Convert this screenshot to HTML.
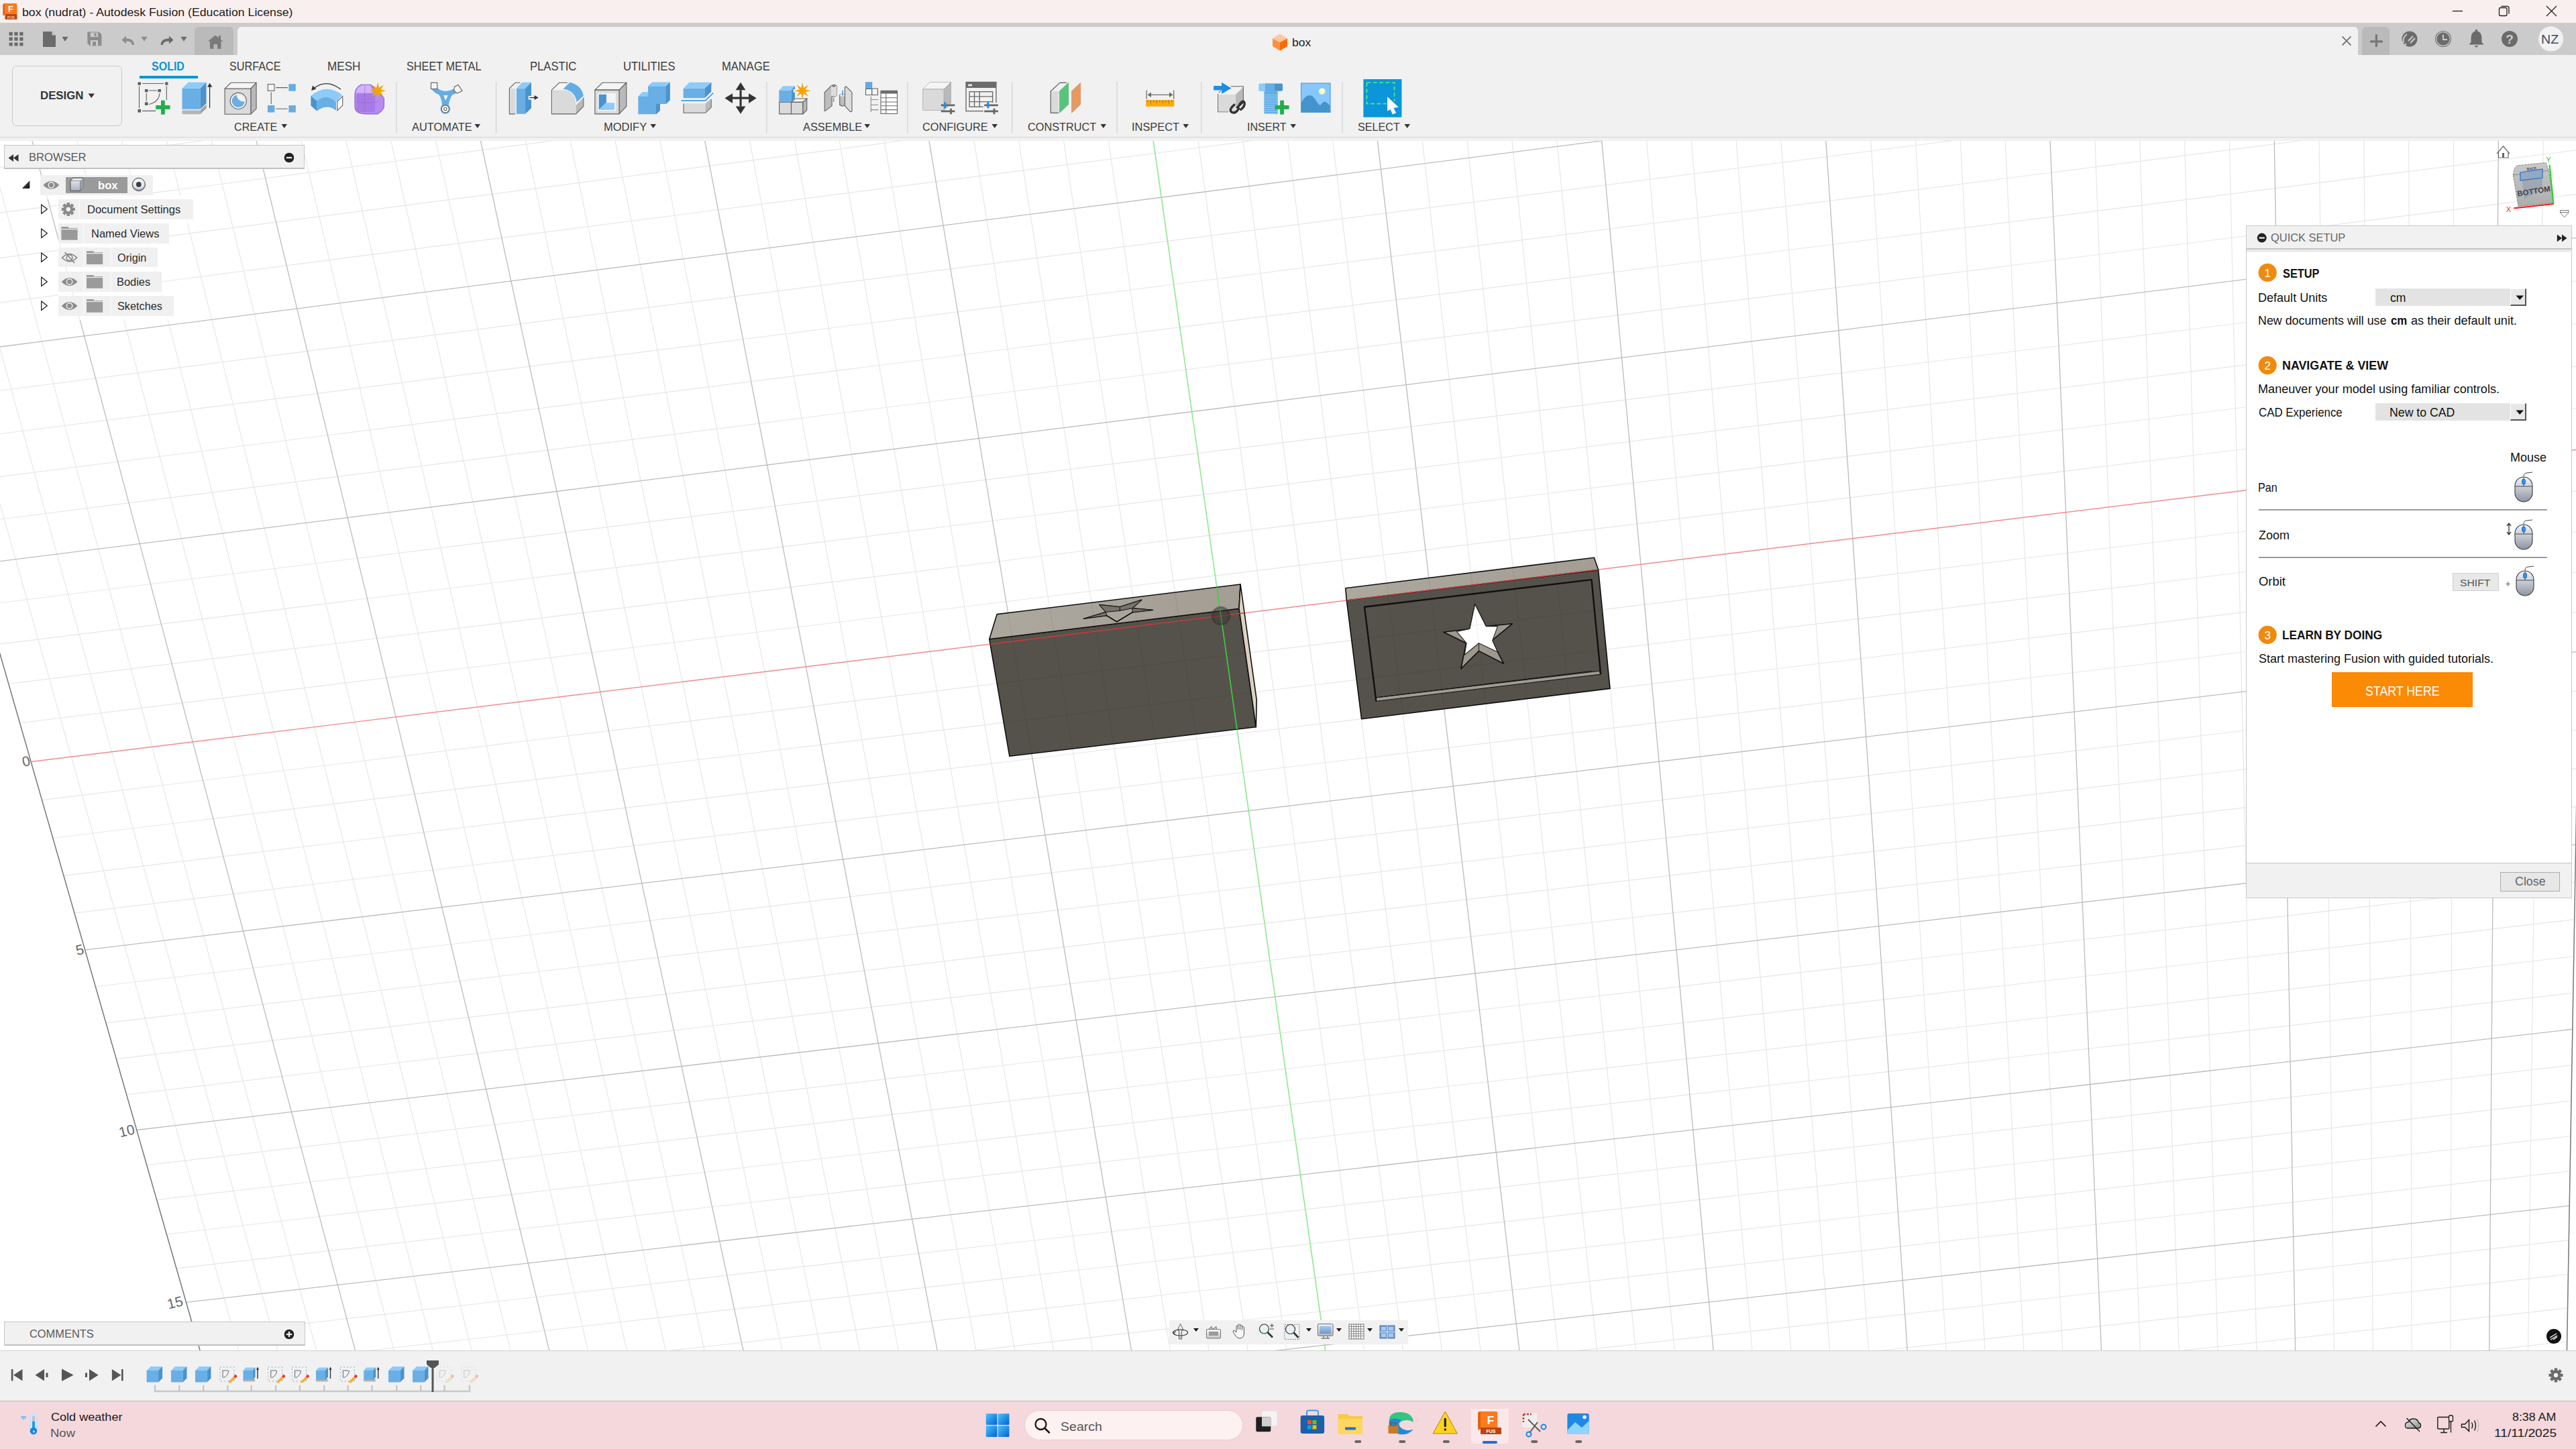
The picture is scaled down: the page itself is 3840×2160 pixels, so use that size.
<!DOCTYPE html>
<html><head><meta charset="utf-8"><style>
html,body{margin:0;padding:0;width:3840px;height:2160px;overflow:hidden;background:#fff;font-family:"Liberation Sans", sans-serif;}
</style></head><body>
<div style="position:absolute;left:0.0px;top:0.0px;width:3840.0px;height:34.0px;background:#f9efee;"></div>
<div style="position:absolute;left:0.0px;top:34.0px;width:3840.0px;height:48.0px;background:#cbcbcb;"></div>
<div style="position:absolute;left:0.0px;top:82.0px;width:3840.0px;height:123.0px;background:#f1f1f1;"></div>
<div style="position:absolute;left:0.0px;top:204.0px;width:3840.0px;height:1.0px;background:#d3d3d3;"></div>
<div style="position:absolute;left:0.0px;top:205.0px;width:3840.0px;height:5.0px;background:#f1f1f1;"></div>
<div style="position:absolute;left:0.0px;top:210.0px;width:3840.0px;height:1803.0px;background:#ffffff;"></div>
<div style="position:absolute;left:0.0px;top:2013.0px;width:3840.0px;height:76.0px;background:#f1f1f1;"></div>
<div style="position:absolute;left:0.0px;top:2013.0px;width:3840.0px;height:1.0px;background:#d0d0d0;"></div>
<div style="position:absolute;left:0.0px;top:2088.0px;width:3840.0px;height:72.0px;background:#f5d8dc;"></div>
<div style="position:absolute;left:0.0px;top:2088.0px;width:3840.0px;height:1.0px;background:#c9b6b8;"></div>
<svg style="position:absolute;left:0px;top:210px;" width="3840" height="1803" viewBox="0 0 3840 1803"><line x1="-317.15" y1="-339.99" x2="512.21" y2="2548.94" stroke="#e6e6e6" stroke-width="1.15"/><line x1="-251.11" y1="-348.94" x2="564.77" y2="2543.36" stroke="#e6e6e6" stroke-width="1.15"/><line x1="-184.98" y1="-357.89" x2="617.37" y2="2537.77" stroke="#e6e6e6" stroke-width="1.15"/><line x1="-118.78" y1="-366.85" x2="670.04" y2="2532.18" stroke="#e6e6e6" stroke-width="1.15"/><line x1="13.90" y1="-384.82" x2="775.52" y2="2520.98" stroke="#e6e6e6" stroke-width="1.15"/><line x1="80.37" y1="-393.82" x2="828.35" y2="2515.37" stroke="#e6e6e6" stroke-width="1.15"/><line x1="146.92" y1="-402.83" x2="881.23" y2="2509.75" stroke="#e6e6e6" stroke-width="1.15"/><line x1="213.56" y1="-411.85" x2="934.16" y2="2504.13" stroke="#e6e6e6" stroke-width="1.15"/><line x1="347.10" y1="-429.93" x2="1040.19" y2="2492.87" stroke="#e6e6e6" stroke-width="1.15"/><line x1="414.00" y1="-438.99" x2="1093.29" y2="2487.23" stroke="#e6e6e6" stroke-width="1.15"/><line x1="480.99" y1="-448.06" x2="1146.44" y2="2481.58" stroke="#e6e6e6" stroke-width="1.15"/><line x1="548.07" y1="-457.14" x2="1199.64" y2="2475.93" stroke="#e6e6e6" stroke-width="1.15"/><line x1="682.48" y1="-475.34" x2="1306.22" y2="2464.61" stroke="#e6e6e6" stroke-width="1.15"/><line x1="749.82" y1="-484.46" x2="1359.59" y2="2458.95" stroke="#e6e6e6" stroke-width="1.15"/><line x1="817.25" y1="-493.59" x2="1413.01" y2="2453.27" stroke="#e6e6e6" stroke-width="1.15"/><line x1="884.77" y1="-502.73" x2="1466.49" y2="2447.59" stroke="#e6e6e6" stroke-width="1.15"/><line x1="1020.06" y1="-521.05" x2="1573.62" y2="2436.21" stroke="#e6e6e6" stroke-width="1.15"/><line x1="1087.84" y1="-530.23" x2="1627.27" y2="2430.52" stroke="#e6e6e6" stroke-width="1.15"/><line x1="1155.71" y1="-539.41" x2="1680.97" y2="2424.81" stroke="#e6e6e6" stroke-width="1.15"/><line x1="1223.67" y1="-548.62" x2="1734.72" y2="2419.10" stroke="#e6e6e6" stroke-width="1.15"/><line x1="1359.86" y1="-567.06" x2="1842.40" y2="2407.67" stroke="#e6e6e6" stroke-width="1.15"/><line x1="1428.09" y1="-576.29" x2="1896.33" y2="2401.94" stroke="#e6e6e6" stroke-width="1.15"/><line x1="1496.41" y1="-585.54" x2="1950.31" y2="2396.21" stroke="#e6e6e6" stroke-width="1.15"/><line x1="1564.82" y1="-594.81" x2="2004.34" y2="2390.47" stroke="#e6e6e6" stroke-width="1.15"/><line x1="1701.90" y1="-613.37" x2="2112.58" y2="2378.97" stroke="#e6e6e6" stroke-width="1.15"/><line x1="1770.58" y1="-622.67" x2="2166.79" y2="2373.22" stroke="#e6e6e6" stroke-width="1.15"/><line x1="1839.35" y1="-631.98" x2="2221.05" y2="2367.45" stroke="#e6e6e6" stroke-width="1.15"/><line x1="1908.21" y1="-641.30" x2="2275.37" y2="2361.68" stroke="#e6e6e6" stroke-width="1.15"/><line x1="2046.21" y1="-659.98" x2="2384.17" y2="2350.13" stroke="#e6e6e6" stroke-width="1.15"/><line x1="2115.35" y1="-669.35" x2="2438.66" y2="2344.34" stroke="#e6e6e6" stroke-width="1.15"/><line x1="2184.57" y1="-678.72" x2="2493.20" y2="2338.55" stroke="#e6e6e6" stroke-width="1.15"/><line x1="2253.89" y1="-688.10" x2="2547.80" y2="2332.75" stroke="#e6e6e6" stroke-width="1.15"/><line x1="2392.80" y1="-706.91" x2="2657.17" y2="2321.13" stroke="#e6e6e6" stroke-width="1.15"/><line x1="2462.40" y1="-716.34" x2="2711.94" y2="2315.32" stroke="#e6e6e6" stroke-width="1.15"/><line x1="2532.09" y1="-725.77" x2="2766.77" y2="2309.49" stroke="#e6e6e6" stroke-width="1.15"/><line x1="2601.87" y1="-735.22" x2="2821.66" y2="2303.67" stroke="#e6e6e6" stroke-width="1.15"/><line x1="2741.71" y1="-754.15" x2="2931.60" y2="2291.99" stroke="#e6e6e6" stroke-width="1.15"/><line x1="2811.77" y1="-763.64" x2="2986.66" y2="2286.14" stroke="#e6e6e6" stroke-width="1.15"/><line x1="2881.92" y1="-773.14" x2="3041.77" y2="2280.29" stroke="#e6e6e6" stroke-width="1.15"/><line x1="2952.17" y1="-782.65" x2="3096.95" y2="2274.43" stroke="#e6e6e6" stroke-width="1.15"/><line x1="3092.95" y1="-801.71" x2="3207.47" y2="2262.69" stroke="#e6e6e6" stroke-width="1.15"/><line x1="3163.47" y1="-811.26" x2="3262.82" y2="2256.81" stroke="#e6e6e6" stroke-width="1.15"/><line x1="3234.10" y1="-820.82" x2="3318.22" y2="2250.93" stroke="#e6e6e6" stroke-width="1.15"/><line x1="3304.82" y1="-830.40" x2="3373.69" y2="2245.04" stroke="#e6e6e6" stroke-width="1.15"/><line x1="3446.54" y1="-849.58" x2="3484.79" y2="2233.24" stroke="#e6e6e6" stroke-width="1.15"/><line x1="3517.54" y1="-859.20" x2="3540.43" y2="2227.33" stroke="#e6e6e6" stroke-width="1.15"/><line x1="3588.64" y1="-868.83" x2="3596.12" y2="2221.41" stroke="#e6e6e6" stroke-width="1.15"/><line x1="3659.84" y1="-878.46" x2="3651.88" y2="2215.49" stroke="#e6e6e6" stroke-width="1.15"/><line x1="3802.51" y1="-897.78" x2="3763.57" y2="2203.63" stroke="#e6e6e6" stroke-width="1.15"/><line x1="3874.00" y1="-907.46" x2="3819.50" y2="2197.69" stroke="#e6e6e6" stroke-width="1.15"/><line x1="518.43" y1="2570.62" x2="3819.09" y2="2220.79" stroke="#e6e6e6" stroke-width="1.15"/><line x1="505.96" y1="2527.18" x2="3819.91" y2="2174.49" stroke="#e6e6e6" stroke-width="1.15"/><line x1="493.39" y1="2483.38" x2="3820.73" y2="2127.81" stroke="#e6e6e6" stroke-width="1.15"/><line x1="467.94" y1="2394.72" x2="3822.39" y2="2033.27" stroke="#e6e6e6" stroke-width="1.15"/><line x1="455.05" y1="2349.85" x2="3823.23" y2="1985.40" stroke="#e6e6e6" stroke-width="1.15"/><line x1="442.07" y1="2304.61" x2="3824.07" y2="1937.13" stroke="#e6e6e6" stroke-width="1.15"/><line x1="428.97" y1="2258.99" x2="3824.93" y2="1888.45" stroke="#e6e6e6" stroke-width="1.15"/><line x1="402.46" y1="2166.63" x2="3826.66" y2="1789.82" stroke="#e6e6e6" stroke-width="1.15"/><line x1="389.03" y1="2119.87" x2="3827.53" y2="1739.88" stroke="#e6e6e6" stroke-width="1.15"/><line x1="375.50" y1="2072.72" x2="3828.42" y2="1689.50" stroke="#e6e6e6" stroke-width="1.15"/><line x1="361.85" y1="2025.17" x2="3829.31" y2="1638.68" stroke="#e6e6e6" stroke-width="1.15"/><line x1="334.20" y1="1928.87" x2="3831.12" y2="1535.71" stroke="#e6e6e6" stroke-width="1.15"/><line x1="320.20" y1="1880.11" x2="3832.03" y2="1483.54" stroke="#e6e6e6" stroke-width="1.15"/><line x1="306.08" y1="1830.92" x2="3832.96" y2="1430.92" stroke="#e6e6e6" stroke-width="1.15"/><line x1="291.84" y1="1781.32" x2="3833.89" y2="1377.82" stroke="#e6e6e6" stroke-width="1.15"/><line x1="262.99" y1="1680.82" x2="3835.78" y2="1270.21" stroke="#e6e6e6" stroke-width="1.15"/><line x1="248.38" y1="1629.91" x2="3836.73" y2="1215.67" stroke="#e6e6e6" stroke-width="1.15"/><line x1="233.63" y1="1578.56" x2="3837.70" y2="1160.64" stroke="#e6e6e6" stroke-width="1.15"/><line x1="218.76" y1="1526.76" x2="3838.68" y2="1105.11" stroke="#e6e6e6" stroke-width="1.15"/><line x1="188.63" y1="1421.79" x2="3840.65" y2="992.53" stroke="#e6e6e6" stroke-width="1.15"/><line x1="173.36" y1="1368.60" x2="3841.65" y2="935.46" stroke="#e6e6e6" stroke-width="1.15"/><line x1="157.95" y1="1314.93" x2="3842.66" y2="877.86" stroke="#e6e6e6" stroke-width="1.15"/><line x1="142.41" y1="1260.79" x2="3843.68" y2="819.73" stroke="#e6e6e6" stroke-width="1.15"/><line x1="110.90" y1="1151.03" x2="3845.75" y2="701.83" stroke="#e6e6e6" stroke-width="1.15"/><line x1="94.93" y1="1095.40" x2="3846.80" y2="642.05" stroke="#e6e6e6" stroke-width="1.15"/><line x1="78.81" y1="1039.26" x2="3847.86" y2="581.70" stroke="#e6e6e6" stroke-width="1.15"/><line x1="62.55" y1="982.61" x2="3848.93" y2="520.77" stroke="#e6e6e6" stroke-width="1.15"/><line x1="29.57" y1="867.73" x2="3851.10" y2="397.16" stroke="#e6e6e6" stroke-width="1.15"/><line x1="12.85" y1="809.49" x2="3852.20" y2="334.47" stroke="#e6e6e6" stroke-width="1.15"/><line x1="-4.03" y1="750.70" x2="3853.31" y2="271.16" stroke="#e6e6e6" stroke-width="1.15"/><line x1="-21.06" y1="691.37" x2="3854.43" y2="207.24" stroke="#e6e6e6" stroke-width="1.15"/><line x1="-55.62" y1="571.00" x2="3856.71" y2="77.50" stroke="#e6e6e6" stroke-width="1.15"/><line x1="-73.14" y1="509.96" x2="3857.87" y2="11.67" stroke="#e6e6e6" stroke-width="1.15"/><line x1="-90.83" y1="448.34" x2="3859.03" y2="-54.81" stroke="#e6e6e6" stroke-width="1.15"/><line x1="-108.69" y1="386.12" x2="3860.21" y2="-121.96" stroke="#e6e6e6" stroke-width="1.15"/><line x1="-144.94" y1="259.87" x2="3862.60" y2="-258.29" stroke="#e6e6e6" stroke-width="1.15"/><line x1="-163.32" y1="195.82" x2="3863.82" y2="-327.50" stroke="#e6e6e6" stroke-width="1.15"/><line x1="-181.89" y1="131.14" x2="3865.04" y2="-397.41" stroke="#e6e6e6" stroke-width="1.15"/><line x1="-200.64" y1="65.83" x2="3866.28" y2="-468.03" stroke="#e6e6e6" stroke-width="1.15"/><line x1="-238.70" y1="-66.75" x2="3868.80" y2="-611.47" stroke="#e6e6e6" stroke-width="1.15"/><line x1="-258.02" y1="-134.04" x2="3870.08" y2="-684.32" stroke="#e6e6e6" stroke-width="1.15"/><line x1="-277.53" y1="-202.00" x2="3871.37" y2="-757.92" stroke="#e6e6e6" stroke-width="1.15"/><line x1="-297.24" y1="-270.65" x2="3872.68" y2="-832.30" stroke="#e6e6e6" stroke-width="1.15"/><line x1="-52.48" y1="-375.83" x2="722.75" y2="2526.58" stroke="#bcbcbc" stroke-width="1.3"/><line x1="280.29" y1="-420.88" x2="987.15" y2="2498.50" stroke="#bcbcbc" stroke-width="1.3"/><line x1="615.23" y1="-466.24" x2="1252.90" y2="2470.28" stroke="#bcbcbc" stroke-width="1.3"/><line x1="952.37" y1="-511.88" x2="1520.03" y2="2441.91" stroke="#bcbcbc" stroke-width="1.3"/><line x1="1291.72" y1="-557.83" x2="1788.54" y2="2413.39" stroke="#bcbcbc" stroke-width="1.3"/><line x1="1977.17" y1="-650.64" x2="2329.74" y2="2355.91" stroke="#bcbcbc" stroke-width="1.3"/><line x1="2323.30" y1="-697.50" x2="2602.46" y2="2326.95" stroke="#bcbcbc" stroke-width="1.3"/><line x1="2671.74" y1="-744.68" x2="2876.60" y2="2297.83" stroke="#bcbcbc" stroke-width="1.3"/><line x1="3022.51" y1="-792.17" x2="3152.18" y2="2268.56" stroke="#bcbcbc" stroke-width="1.3"/><line x1="3375.63" y1="-839.98" x2="3429.21" y2="2239.14" stroke="#bcbcbc" stroke-width="1.3"/><line x1="3731.13" y1="-888.12" x2="3707.69" y2="2209.56" stroke="#bcbcbc" stroke-width="1.3"/><line x1="480.71" y1="2439.23" x2="3821.55" y2="2080.74" stroke="#bcbcbc" stroke-width="1.3"/><line x1="415.77" y1="2213.00" x2="3825.79" y2="1839.35" stroke="#bcbcbc" stroke-width="1.3"/><line x1="348.08" y1="1977.23" x2="3830.21" y2="1587.42" stroke="#bcbcbc" stroke-width="1.3"/><line x1="277.48" y1="1731.28" x2="3834.83" y2="1324.25" stroke="#bcbcbc" stroke-width="1.3"/><line x1="203.76" y1="1474.51" x2="3839.66" y2="1049.08" stroke="#bcbcbc" stroke-width="1.3"/><line x1="126.72" y1="1206.16" x2="3844.71" y2="761.06" stroke="#bcbcbc" stroke-width="1.3"/><line x1="-38.26" y1="631.47" x2="3855.57" y2="142.69" stroke="#bcbcbc" stroke-width="1.3"/><line x1="-126.73" y1="323.30" x2="3861.40" y2="-189.79" stroke="#bcbcbc" stroke-width="1.3"/><line x1="-219.58" y1="-0.14" x2="3867.54" y2="-539.38" stroke="#bcbcbc" stroke-width="1.3"/><line x1="-317.15" y1="-339.99" x2="3874.00" y2="-907.46" stroke="#bcbcbc" stroke-width="1.3"/><line x1="-317.15" y1="-339.99" x2="512.21" y2="2548.94" stroke="#7a7a7a" stroke-width="1.5"/><line x1="3874.00" y1="-907.46" x2="3819.50" y2="2197.69" stroke="#7a7a7a" stroke-width="1.5"/><line x1="46.13" y1="925.44" x2="3850.01" y2="459.26" stroke="#f08a8a" stroke-width="1.4"/><line x1="1633.32" y1="-604.08" x2="2058.44" y2="2384.72" stroke="#8fe88f" stroke-width="1.6"/></svg>
<div style="position:absolute;left:9px;top:1123px;width:60px;height:24px;line-height:24px;text-align:center;font-size:21px;color:#666;transform:rotate(-14deg)">0</div>
<div style="position:absolute;left:89px;top:1404px;width:60px;height:24px;line-height:24px;text-align:center;font-size:21px;color:#666;transform:rotate(-14deg)">5</div>
<div style="position:absolute;left:158.6px;top:1674px;width:60px;height:24px;line-height:24px;text-align:center;font-size:21px;color:#666;transform:rotate(-14deg)">10</div>
<div style="position:absolute;left:231px;top:1930px;width:60px;height:24px;line-height:24px;text-align:center;font-size:21px;color:#666;transform:rotate(-14deg)">15</div>
<svg style="position:absolute;left:0px;top:210px;" width="3840" height="1803" viewBox="0 0 3840 1803"><defs><linearGradient id="tf" x1="0" y1="0" x2="1" y2="0"><stop offset="0" stop-color="#ada89f"/><stop offset="1" stop-color="#a39e94"/></linearGradient><clipPath id="bx"><polygon points="1486.2,705.6 1849.1,661.0 1847.0,697.3 1474.8,742.8"/><polygon points="1474.8,742.8 1847.0,697.3 1872.3,873.8 1504.9,917.3"/><polygon points="1849.1,661.0 1873.3,833.9 1872.3,873.8 1847.0,697.3"/><polygon points="2005.8,666.7 2376.4,621.3 2382.6,639.6 2007.4,685.0"/><polygon points="2007.4,685.0 2382.6,639.6 2400.0,816.4 2029.6,861.8"/></clipPath></defs><polygon points="1474.8,742.8 1847.0,697.3 1872.3,873.8 1504.9,917.3" fill="#55524c" stroke="#111" stroke-width="1.6" stroke-linejoin="round"/><polygon points="1486.2,705.6 1849.1,661.0 1847.0,697.3 1474.8,742.8" fill="url(#tf)" stroke="#111" stroke-width="1.6" stroke-linejoin="round"/><polygon points="1849.1,661.0 1873.3,833.9 1872.3,873.8 1847.0,697.3" fill="#dcd2c2" stroke="#111" stroke-width="1.6" stroke-linejoin="round"/><polygon points="1615.2,712.4 1648.3,702.4 1638.8,691.5 1669.4,694.6 1701.9,684.2 1688.0,696.7 1718.7,699.3 1688.0,702.9 1664.7,716.9 1649.8,707.6" fill="#aaa59c" stroke="#111" stroke-width="1.3" stroke-linejoin="round"/><polygon points="1638.8,691.5 1669.4,694.6 1669.4,700.4 1648.3,702.4" fill="#77746e" stroke="#111" stroke-width="1" stroke-linejoin="round"/><polygon points="1669.4,694.6 1701.9,684.2 1688.0,696.7 1669.4,700.4" fill="#77746e" stroke="#111" stroke-width="1" stroke-linejoin="round"/><polygon points="1615.2,712.4 1648.3,702.4 1649.8,707.6" fill="#77746e" stroke="#111" stroke-width="1" stroke-linejoin="round"/><polygon points="1688.0,696.7 1718.7,699.3 1688.0,702.9" fill="#77746e" stroke="#111" stroke-width="1" stroke-linejoin="round"/><polyline points="1649.8,707.6 1664.7,716.9 1688.0,702.9" fill="none" stroke="#111" stroke-width="1.3"/><polygon points="2007.4,685.0 2382.6,639.6 2400.0,816.4 2029.6,861.8" fill="#55524c" stroke="#111" stroke-width="1.6" stroke-linejoin="round"/><polygon points="2005.8,666.7 2376.4,621.3 2382.6,639.6 2007.4,685.0" fill="url(#tf)" stroke="#111" stroke-width="1.6" stroke-linejoin="round"/><polygon points="2051.4,829.9 2384.1,790.3 2386.1,795.1 2051.4,835.3" fill="#a19c92" stroke="#111" stroke-width="1"/><polyline points="2051.4,835.3 2034.0,694.7 2372.5,654.1 2386.1,795.1" fill="none" stroke="#111" stroke-width="2.4" stroke-linejoin="round"/><polyline points="2051.4,829.9 2372.5,790.3" fill="none" stroke="#111" stroke-width="1"/><polygon points="2198.7,690.8 2215.1,723.6 2254.3,719.8 2223.8,744.9 2241.5,779.3 2204.5,760.4 2177.8,787.0 2185.5,748.8 2151.9,732.3 2190.9,727.5" fill="#9e998d" stroke="#111" stroke-width="1.6" stroke-linejoin="round"/><polygon points="2198.7,690.8 2215.1,723.6 2232.5,723.6 2224.7,744.9 2232.5,761.9 2204.5,748.8 2183.2,766.2 2186.1,748.8 2171.6,731.4 2190.9,727.5" fill="#ffffff" stroke="#222" stroke-width="1.1" stroke-linejoin="round"/><polyline points="2204.5,748.8 2204.5,760.4" fill="none" stroke="#222" stroke-width="1"/><g clip-path="url(#bx)" opacity="0.07"><line x1="-317.15" y1="-339.99" x2="512.21" y2="2548.94" stroke="#000" stroke-width="1"/><line x1="-251.11" y1="-348.94" x2="564.77" y2="2543.36" stroke="#000" stroke-width="1"/><line x1="-184.98" y1="-357.89" x2="617.37" y2="2537.77" stroke="#000" stroke-width="1"/><line x1="-118.78" y1="-366.85" x2="670.04" y2="2532.18" stroke="#000" stroke-width="1"/><line x1="-52.48" y1="-375.83" x2="722.75" y2="2526.58" stroke="#000" stroke-width="1"/><line x1="13.90" y1="-384.82" x2="775.52" y2="2520.98" stroke="#000" stroke-width="1"/><line x1="80.37" y1="-393.82" x2="828.35" y2="2515.37" stroke="#000" stroke-width="1"/><line x1="146.92" y1="-402.83" x2="881.23" y2="2509.75" stroke="#000" stroke-width="1"/><line x1="213.56" y1="-411.85" x2="934.16" y2="2504.13" stroke="#000" stroke-width="1"/><line x1="280.29" y1="-420.88" x2="987.15" y2="2498.50" stroke="#000" stroke-width="1"/><line x1="347.10" y1="-429.93" x2="1040.19" y2="2492.87" stroke="#000" stroke-width="1"/><line x1="414.00" y1="-438.99" x2="1093.29" y2="2487.23" stroke="#000" stroke-width="1"/><line x1="480.99" y1="-448.06" x2="1146.44" y2="2481.58" stroke="#000" stroke-width="1"/><line x1="548.07" y1="-457.14" x2="1199.64" y2="2475.93" stroke="#000" stroke-width="1"/><line x1="615.23" y1="-466.24" x2="1252.90" y2="2470.28" stroke="#000" stroke-width="1"/><line x1="682.48" y1="-475.34" x2="1306.22" y2="2464.61" stroke="#000" stroke-width="1"/><line x1="749.82" y1="-484.46" x2="1359.59" y2="2458.95" stroke="#000" stroke-width="1"/><line x1="817.25" y1="-493.59" x2="1413.01" y2="2453.27" stroke="#000" stroke-width="1"/><line x1="884.77" y1="-502.73" x2="1466.49" y2="2447.59" stroke="#000" stroke-width="1"/><line x1="952.37" y1="-511.88" x2="1520.03" y2="2441.91" stroke="#000" stroke-width="1"/><line x1="1020.06" y1="-521.05" x2="1573.62" y2="2436.21" stroke="#000" stroke-width="1"/><line x1="1087.84" y1="-530.23" x2="1627.27" y2="2430.52" stroke="#000" stroke-width="1"/><line x1="1155.71" y1="-539.41" x2="1680.97" y2="2424.81" stroke="#000" stroke-width="1"/><line x1="1223.67" y1="-548.62" x2="1734.72" y2="2419.10" stroke="#000" stroke-width="1"/><line x1="1291.72" y1="-557.83" x2="1788.54" y2="2413.39" stroke="#000" stroke-width="1"/><line x1="1359.86" y1="-567.06" x2="1842.40" y2="2407.67" stroke="#000" stroke-width="1"/><line x1="1428.09" y1="-576.29" x2="1896.33" y2="2401.94" stroke="#000" stroke-width="1"/><line x1="1496.41" y1="-585.54" x2="1950.31" y2="2396.21" stroke="#000" stroke-width="1"/><line x1="1564.82" y1="-594.81" x2="2004.34" y2="2390.47" stroke="#000" stroke-width="1"/><line x1="1633.32" y1="-604.08" x2="2058.44" y2="2384.72" stroke="#000" stroke-width="1"/><line x1="1701.90" y1="-613.37" x2="2112.58" y2="2378.97" stroke="#000" stroke-width="1"/><line x1="1770.58" y1="-622.67" x2="2166.79" y2="2373.22" stroke="#000" stroke-width="1"/><line x1="1839.35" y1="-631.98" x2="2221.05" y2="2367.45" stroke="#000" stroke-width="1"/><line x1="1908.21" y1="-641.30" x2="2275.37" y2="2361.68" stroke="#000" stroke-width="1"/><line x1="1977.17" y1="-650.64" x2="2329.74" y2="2355.91" stroke="#000" stroke-width="1"/><line x1="2046.21" y1="-659.98" x2="2384.17" y2="2350.13" stroke="#000" stroke-width="1"/><line x1="2115.35" y1="-669.35" x2="2438.66" y2="2344.34" stroke="#000" stroke-width="1"/><line x1="2184.57" y1="-678.72" x2="2493.20" y2="2338.55" stroke="#000" stroke-width="1"/><line x1="2253.89" y1="-688.10" x2="2547.80" y2="2332.75" stroke="#000" stroke-width="1"/><line x1="2323.30" y1="-697.50" x2="2602.46" y2="2326.95" stroke="#000" stroke-width="1"/><line x1="2392.80" y1="-706.91" x2="2657.17" y2="2321.13" stroke="#000" stroke-width="1"/><line x1="2462.40" y1="-716.34" x2="2711.94" y2="2315.32" stroke="#000" stroke-width="1"/><line x1="2532.09" y1="-725.77" x2="2766.77" y2="2309.49" stroke="#000" stroke-width="1"/><line x1="2601.87" y1="-735.22" x2="2821.66" y2="2303.67" stroke="#000" stroke-width="1"/><line x1="2671.74" y1="-744.68" x2="2876.60" y2="2297.83" stroke="#000" stroke-width="1"/><line x1="2741.71" y1="-754.15" x2="2931.60" y2="2291.99" stroke="#000" stroke-width="1"/><line x1="2811.77" y1="-763.64" x2="2986.66" y2="2286.14" stroke="#000" stroke-width="1"/><line x1="2881.92" y1="-773.14" x2="3041.77" y2="2280.29" stroke="#000" stroke-width="1"/><line x1="2952.17" y1="-782.65" x2="3096.95" y2="2274.43" stroke="#000" stroke-width="1"/><line x1="3022.51" y1="-792.17" x2="3152.18" y2="2268.56" stroke="#000" stroke-width="1"/><line x1="3092.95" y1="-801.71" x2="3207.47" y2="2262.69" stroke="#000" stroke-width="1"/><line x1="3163.47" y1="-811.26" x2="3262.82" y2="2256.81" stroke="#000" stroke-width="1"/><line x1="3234.10" y1="-820.82" x2="3318.22" y2="2250.93" stroke="#000" stroke-width="1"/><line x1="3304.82" y1="-830.40" x2="3373.69" y2="2245.04" stroke="#000" stroke-width="1"/><line x1="3375.63" y1="-839.98" x2="3429.21" y2="2239.14" stroke="#000" stroke-width="1"/><line x1="3446.54" y1="-849.58" x2="3484.79" y2="2233.24" stroke="#000" stroke-width="1"/><line x1="3517.54" y1="-859.20" x2="3540.43" y2="2227.33" stroke="#000" stroke-width="1"/><line x1="3588.64" y1="-868.83" x2="3596.12" y2="2221.41" stroke="#000" stroke-width="1"/><line x1="3659.84" y1="-878.46" x2="3651.88" y2="2215.49" stroke="#000" stroke-width="1"/><line x1="3731.13" y1="-888.12" x2="3707.69" y2="2209.56" stroke="#000" stroke-width="1"/><line x1="3802.51" y1="-897.78" x2="3763.57" y2="2203.63" stroke="#000" stroke-width="1"/><line x1="3874.00" y1="-907.46" x2="3819.50" y2="2197.69" stroke="#000" stroke-width="1"/><line x1="518.43" y1="2570.62" x2="3819.09" y2="2220.79" stroke="#000" stroke-width="1"/><line x1="505.96" y1="2527.18" x2="3819.91" y2="2174.49" stroke="#000" stroke-width="1"/><line x1="493.39" y1="2483.38" x2="3820.73" y2="2127.81" stroke="#000" stroke-width="1"/><line x1="480.71" y1="2439.23" x2="3821.55" y2="2080.74" stroke="#000" stroke-width="1"/><line x1="467.94" y1="2394.72" x2="3822.39" y2="2033.27" stroke="#000" stroke-width="1"/><line x1="455.05" y1="2349.85" x2="3823.23" y2="1985.40" stroke="#000" stroke-width="1"/><line x1="442.07" y1="2304.61" x2="3824.07" y2="1937.13" stroke="#000" stroke-width="1"/><line x1="428.97" y1="2258.99" x2="3824.93" y2="1888.45" stroke="#000" stroke-width="1"/><line x1="415.77" y1="2213.00" x2="3825.79" y2="1839.35" stroke="#000" stroke-width="1"/><line x1="402.46" y1="2166.63" x2="3826.66" y2="1789.82" stroke="#000" stroke-width="1"/><line x1="389.03" y1="2119.87" x2="3827.53" y2="1739.88" stroke="#000" stroke-width="1"/><line x1="375.50" y1="2072.72" x2="3828.42" y2="1689.50" stroke="#000" stroke-width="1"/><line x1="361.85" y1="2025.17" x2="3829.31" y2="1638.68" stroke="#000" stroke-width="1"/><line x1="348.08" y1="1977.23" x2="3830.21" y2="1587.42" stroke="#000" stroke-width="1"/><line x1="334.20" y1="1928.87" x2="3831.12" y2="1535.71" stroke="#000" stroke-width="1"/><line x1="320.20" y1="1880.11" x2="3832.03" y2="1483.54" stroke="#000" stroke-width="1"/><line x1="306.08" y1="1830.92" x2="3832.96" y2="1430.92" stroke="#000" stroke-width="1"/><line x1="291.84" y1="1781.32" x2="3833.89" y2="1377.82" stroke="#000" stroke-width="1"/><line x1="277.48" y1="1731.28" x2="3834.83" y2="1324.25" stroke="#000" stroke-width="1"/><line x1="262.99" y1="1680.82" x2="3835.78" y2="1270.21" stroke="#000" stroke-width="1"/><line x1="248.38" y1="1629.91" x2="3836.73" y2="1215.67" stroke="#000" stroke-width="1"/><line x1="233.63" y1="1578.56" x2="3837.70" y2="1160.64" stroke="#000" stroke-width="1"/><line x1="218.76" y1="1526.76" x2="3838.68" y2="1105.11" stroke="#000" stroke-width="1"/><line x1="203.76" y1="1474.51" x2="3839.66" y2="1049.08" stroke="#000" stroke-width="1"/><line x1="188.63" y1="1421.79" x2="3840.65" y2="992.53" stroke="#000" stroke-width="1"/><line x1="173.36" y1="1368.60" x2="3841.65" y2="935.46" stroke="#000" stroke-width="1"/><line x1="157.95" y1="1314.93" x2="3842.66" y2="877.86" stroke="#000" stroke-width="1"/><line x1="142.41" y1="1260.79" x2="3843.68" y2="819.73" stroke="#000" stroke-width="1"/><line x1="126.72" y1="1206.16" x2="3844.71" y2="761.06" stroke="#000" stroke-width="1"/><line x1="110.90" y1="1151.03" x2="3845.75" y2="701.83" stroke="#000" stroke-width="1"/><line x1="94.93" y1="1095.40" x2="3846.80" y2="642.05" stroke="#000" stroke-width="1"/><line x1="78.81" y1="1039.26" x2="3847.86" y2="581.70" stroke="#000" stroke-width="1"/><line x1="62.55" y1="982.61" x2="3848.93" y2="520.77" stroke="#000" stroke-width="1"/><line x1="46.13" y1="925.44" x2="3850.01" y2="459.26" stroke="#000" stroke-width="1"/><line x1="29.57" y1="867.73" x2="3851.10" y2="397.16" stroke="#000" stroke-width="1"/><line x1="12.85" y1="809.49" x2="3852.20" y2="334.47" stroke="#000" stroke-width="1"/><line x1="-4.03" y1="750.70" x2="3853.31" y2="271.16" stroke="#000" stroke-width="1"/><line x1="-21.06" y1="691.37" x2="3854.43" y2="207.24" stroke="#000" stroke-width="1"/><line x1="-38.26" y1="631.47" x2="3855.57" y2="142.69" stroke="#000" stroke-width="1"/><line x1="-55.62" y1="571.00" x2="3856.71" y2="77.50" stroke="#000" stroke-width="1"/><line x1="-73.14" y1="509.96" x2="3857.87" y2="11.67" stroke="#000" stroke-width="1"/><line x1="-90.83" y1="448.34" x2="3859.03" y2="-54.81" stroke="#000" stroke-width="1"/><line x1="-108.69" y1="386.12" x2="3860.21" y2="-121.96" stroke="#000" stroke-width="1"/><line x1="-126.73" y1="323.30" x2="3861.40" y2="-189.79" stroke="#000" stroke-width="1"/><line x1="-144.94" y1="259.87" x2="3862.60" y2="-258.29" stroke="#000" stroke-width="1"/><line x1="-163.32" y1="195.82" x2="3863.82" y2="-327.50" stroke="#000" stroke-width="1"/><line x1="-181.89" y1="131.14" x2="3865.04" y2="-397.41" stroke="#000" stroke-width="1"/><line x1="-200.64" y1="65.83" x2="3866.28" y2="-468.03" stroke="#000" stroke-width="1"/><line x1="-219.58" y1="-0.14" x2="3867.54" y2="-539.38" stroke="#000" stroke-width="1"/><line x1="-238.70" y1="-66.75" x2="3868.80" y2="-611.47" stroke="#000" stroke-width="1"/><line x1="-258.02" y1="-134.04" x2="3870.08" y2="-684.32" stroke="#000" stroke-width="1"/><line x1="-277.53" y1="-202.00" x2="3871.37" y2="-757.92" stroke="#000" stroke-width="1"/><line x1="-297.24" y1="-270.65" x2="3872.68" y2="-832.30" stroke="#000" stroke-width="1"/><line x1="-317.15" y1="-339.99" x2="3874.00" y2="-907.46" stroke="#000" stroke-width="1"/></g><g clip-path="url(#bx)"><line x1="46.13" y1="925.44" x2="3850.01" y2="459.26" stroke="#c43c3c" stroke-width="1.6"/><line x1="1633.32" y1="-604.08" x2="2058.44" y2="2384.72" stroke="#3fd03f" stroke-width="1.6"/></g><circle cx="1819.9" cy="708.1" r="13" fill="rgba(50,50,50,0.42)" stroke="rgba(40,40,40,0.35)" stroke-width="3"/></svg>
<div style="position:absolute;left:32.98px;top:10.00px;font-size:17.32px;line-height:1;white-space:nowrap;transform-origin:0 0;transform:scaleX(1.0227);color:#1b1b1b;font-weight:normal;">box (nudrat) - Autodesk Fusion (Education License)</div>
<svg style="position:absolute;left:3px;top:4px;" width="24" height="26" viewBox="0 0 24 26"><rect x="1.5" y="1" width="21" height="17" rx="2" fill="#ff7a1a"/>
<path d="M1.5 3 L4 1 L4 18 L1.5 20Z" fill="#e0600a"/>
<rect x="4.5" y="17" width="18" height="8" rx="1" fill="#b8460f"/>
<text x="13" y="14" font-size="13" font-weight="bold" fill="#fff" text-anchor="middle" font-family="Liberation Sans">F</text>
<text x="13.5" y="23.6" font-size="5.5" font-weight="bold" fill="#fbd2b8" text-anchor="middle" font-family="Liberation Sans">FUS</text></svg>
<svg style="position:absolute;left:3650px;top:0px;" width="190" height="34" viewBox="0 0 190 34"><line x1="5.8" y1="16.5" x2="21" y2="16.5" stroke="#1f1f1f" stroke-width="1.3"/>
<rect x="75.5" y="11.5" width="11.5" height="12" rx="2" fill="none" stroke="#1f1f1f" stroke-width="1.3"/>
<path d="M78.5 9.3 H87.5 Q90 9.3 90 11.8 V20.5" fill="none" stroke="#1f1f1f" stroke-width="1.3"/>
<path d="M146 9 L161 24 M161 9 L146 24" stroke="#1f1f1f" stroke-width="1.3"/></svg>
<div style="position:absolute;left:289.6px;top:40.0px;width:58.2px;height:42.0px;background:#bababa;border-radius:6px 6px 0 0;"></div>
<div style="position:absolute;left:354.0px;top:40.0px;width:3160.5px;height:42.0px;background:#f1f1f1;border-radius:6px 6px 0 0;"></div>
<div style="position:absolute;left:3521.0px;top:40.0px;width:41.0px;height:42.0px;background:#bababa;border-radius:6px 6px 0 0;"></div>
<svg style="position:absolute;left:0px;top:34px;" width="400" height="48" viewBox="0 0 400 48">
<g fill="#6b6b6b">
<rect x="13.6" y="13.8" width="5.2" height="5.2" rx="0.8"/><rect x="21.4" y="13.8" width="5.2" height="5.2" rx="0.8"/><rect x="29.3" y="13.8" width="5.2" height="5.2" rx="0.8"/>
<rect x="13.6" y="21.6" width="5.2" height="5.2" rx="0.8"/><rect x="21.4" y="21.6" width="5.2" height="5.2" rx="0.8"/><rect x="29.3" y="21.6" width="5.2" height="5.2" rx="0.8"/>
<rect x="13.6" y="29.4" width="5.2" height="5.2" rx="0.8"/><rect x="21.4" y="29.4" width="5.2" height="5.2" rx="0.8"/><rect x="29.3" y="29.4" width="5.2" height="5.2" rx="0.8"/>
<path d="M64 13 H77 L83 19 V36 H64Z"/><path d="M77.5 13.5 L82.5 18.5 H77.5Z" fill="#cbcbcb"/>
<path d="M92.4 20.7 H101.7 L97 27.8Z"/>
<path d="M269.4 20.7 H278.7 L274 27.8Z"/>
<path d="M239.5 33 Q240 24 250 23.5 L252 23.5 L252 19.5 L258.5 25.5 L252 31.5 L252 27.5 L250 27.5 Q243 28 243 33Z"/>
</g>
<g fill="#8d8d8d">
<path d="M130.4 13.4 H147.5 L151.4 17.3 V34.3 H134 L130.4 30.7Z"/>
<rect x="135" y="14.5" width="11" height="6.5" fill="#cbcbcb"/><rect x="140.5" y="15.5" width="3" height="4.5" fill="#8d8d8d"/>
<rect x="135" y="26" width="11" height="8.3" fill="#cbcbcb"/><rect x="138" y="28" width="5" height="6.3" fill="#8d8d8d"/>
<path d="M200 33 Q200 24 190 23.5 L188 23.5 L188 19.5 L181.5 25.5 L188 31.5 L188 27.5 L190 27.5 Q197 28 196.5 33Z"/>
<path d="M210.4 20.7 H219.7 L215 27.8Z"/>
</g>
<path d="M310 27.5 L321 18.5 L332.3 27.5 L329.5 27.5 L329.5 38.7 L324 38.7 L324 32 L318.5 32 L318.5 38.7 L313 38.7 L313 27.5Z" fill="#7a7a7a"/>
<rect x="326" y="19" width="3" height="6" fill="#7a7a7a"/>
</svg>
<svg style="position:absolute;left:1896px;top:50px;" width="24" height="26" viewBox="0 0 24 26"><path d="M12 1 L23 7.5 L23 19 L12 25.5 L1 19 L1 7.5Z" fill="#ff8f40"/>
<path d="M12 1 L23 7.5 L12 13.5 L1 7.5Z" fill="#ffc8a0"/><path d="M12 13.5 L23 7.5 L23 19 L12 25.5Z" fill="#ff6a00"/></svg>
<div style="position:absolute;left:1926.29px;top:54.80px;font-size:17.32px;line-height:1;white-space:nowrap;transform-origin:0 0;transform:scaleX(1.0126);color:#222;font-weight:normal;">box</div>
<svg style="position:absolute;left:3480px;top:34px;" width="360" height="48" viewBox="0 0 360 48">
<path d="M11.5 20.3 L24.4 33.5 M24.4 20.3 L11.5 33.5" stroke="#777" stroke-width="1.8"/>
<path d="M53 27.8 H71.8 M62.4 17.2 V36" stroke="#777" stroke-width="3.2"/>
<circle cx="112" cy="24" r="11.5" fill="#6b6b6b"/>
<path d="M103 30 Q101 22 108 17" stroke="#cbcbcb" stroke-width="2" fill="none"/>
<path d="M110 27 L117 20 M113 30 L120 23 M107 31 L103 35" stroke="#cbcbcb" stroke-width="2.2"/>
<circle cx="162" cy="24" r="12" fill="#6b6b6b"/><circle cx="162" cy="24" r="10.3" fill="none" stroke="#cbcbcb" stroke-width="1.2"/>
<path d="M162 17.5 V25 H168" stroke="#cbcbcb" stroke-width="2" fill="none"/>
<path d="M211.5 12 Q219 13 219.5 22 V29 L222.5 32.5 H200.5 L203.5 29 V22 Q204 13 211.5 12Z" fill="#6b6b6b"/><rect x="210" y="10" width="3" height="3" fill="#6b6b6b"/>
<path d="M208.5 34 H214.5 L211.5 37Z" fill="#6b6b6b"/>
<circle cx="261" cy="24" r="12" fill="#6b6b6b"/>
<text x="261" y="31" font-size="19" font-weight="bold" fill="#cbcbcb" text-anchor="middle" font-family="Liberation Sans">?</text>
<circle cx="322.6" cy="24" r="18.6" fill="#f1f1f1"/>
</svg>
<div style="position:absolute;left:3788.39px;top:50.50px;font-size:17.6px;line-height:1;white-space:nowrap;transform-origin:0 0;transform:scaleX(1.1143);color:#3b4a6b;font-weight:normal;">NZ</div>
<div style="position:absolute;left:17.6px;top:98.0px;width:164.1px;height:90.4px;background:#f1f1f1;box-sizing:border-box;border:1.4px solid #c9c9c9;border-radius:7px;"></div>
<div style="position:absolute;left:59.60px;top:134.90px;font-size:16.76px;line-height:1;white-space:nowrap;transform-origin:0 0;transform:scaleX(1.0045);color:#333;font-weight:bold;">DESIGN</div>
<svg style="position:absolute;left:131px;top:139px;" width="11" height="8" viewBox="0 0 11 8"><path d="M0.5 0.5 H10 L5.25 7Z" fill="#333"/></svg>
<div style="position:absolute;left:226.00px;top:90.60px;font-size:17.88px;line-height:1;white-space:nowrap;transform-origin:0 0;transform:scaleX(0.8962);color:#0696d7;font-weight:bold;">SOLID</div>
<div style="position:absolute;left:342.40px;top:90.60px;font-size:17.88px;line-height:1;white-space:nowrap;transform-origin:0 0;transform:scaleX(0.9072);color:#3c3c3c;font-weight:normal;">SURFACE</div>
<div style="position:absolute;left:488.04px;top:90.60px;font-size:17.88px;line-height:1;white-space:nowrap;transform-origin:0 0;transform:scaleX(0.9577);color:#3c3c3c;font-weight:normal;">MESH</div>
<div style="position:absolute;left:606.40px;top:90.60px;font-size:17.88px;line-height:1;white-space:nowrap;transform-origin:0 0;transform:scaleX(0.9105);color:#3c3c3c;font-weight:normal;">SHEET METAL</div>
<div style="position:absolute;left:789.87px;top:90.60px;font-size:17.88px;line-height:1;white-space:nowrap;transform-origin:0 0;transform:scaleX(0.9315);color:#3c3c3c;font-weight:normal;">PLASTIC</div>
<div style="position:absolute;left:929.07px;top:90.60px;font-size:17.88px;line-height:1;white-space:nowrap;transform-origin:0 0;transform:scaleX(0.9291);color:#3c3c3c;font-weight:normal;">UTILITIES</div>
<div style="position:absolute;left:1076.07px;top:90.60px;font-size:17.88px;line-height:1;white-space:nowrap;transform-origin:0 0;transform:scaleX(0.9282);color:#3c3c3c;font-weight:normal;">MANAGE</div>
<div style="position:absolute;left:207.6px;top:113.0px;width:87.2px;height:4.0px;background:#0696d7;"></div>
<div style="position:absolute;left:349.40px;top:181.80px;font-size:16.76px;line-height:1;white-space:nowrap;transform-origin:0 0;transform:scaleX(0.9651);color:#3c3c3c;font-weight:normal;">CREATE</div>
<svg style="position:absolute;left:419px;top:184px;" width="10" height="8" viewBox="0 0 10 8"><path d="M0.5 1 H9 L4.75 7Z" fill="#333"/></svg>
<div style="position:absolute;left:613.50px;top:181.80px;font-size:16.76px;line-height:1;white-space:nowrap;transform-origin:0 0;transform:scaleX(0.9799);color:#3c3c3c;font-weight:normal;">AUTOMATE</div>
<svg style="position:absolute;left:707px;top:184px;" width="10" height="8" viewBox="0 0 10 8"><path d="M0.5 1 H9 L4.75 7Z" fill="#333"/></svg>
<div style="position:absolute;left:900.02px;top:181.80px;font-size:16.76px;line-height:1;white-space:nowrap;transform-origin:0 0;transform:scaleX(0.9849);color:#3c3c3c;font-weight:normal;">MODIFY</div>
<svg style="position:absolute;left:968.9px;top:184px;" width="10" height="8" viewBox="0 0 10 8"><path d="M0.5 1 H9 L4.75 7Z" fill="#333"/></svg>
<div style="position:absolute;left:1197.00px;top:181.80px;font-size:16.76px;line-height:1;white-space:nowrap;transform-origin:0 0;transform:scaleX(0.9764);color:#3c3c3c;font-weight:normal;">ASSEMBLE</div>
<svg style="position:absolute;left:1288px;top:184px;" width="10" height="8" viewBox="0 0 10 8"><path d="M0.5 1 H9 L4.75 7Z" fill="#333"/></svg>
<div style="position:absolute;left:1375.00px;top:181.80px;font-size:16.76px;line-height:1;white-space:nowrap;transform-origin:0 0;transform:scaleX(0.9708);color:#3c3c3c;font-weight:normal;">CONFIGURE</div>
<svg style="position:absolute;left:1478px;top:184px;" width="10" height="8" viewBox="0 0 10 8"><path d="M0.5 1 H9 L4.75 7Z" fill="#333"/></svg>
<div style="position:absolute;left:1532.00px;top:181.80px;font-size:16.76px;line-height:1;white-space:nowrap;transform-origin:0 0;transform:scaleX(0.9722);color:#3c3c3c;font-weight:normal;">CONSTRUCT</div>
<svg style="position:absolute;left:1639.5px;top:184px;" width="10" height="8" viewBox="0 0 10 8"><path d="M0.5 1 H9 L4.75 7Z" fill="#333"/></svg>
<div style="position:absolute;left:1686.62px;top:181.80px;font-size:16.76px;line-height:1;white-space:nowrap;transform-origin:0 0;transform:scaleX(0.9795);color:#3c3c3c;font-weight:normal;">INSPECT</div>
<svg style="position:absolute;left:1763px;top:184px;" width="10" height="8" viewBox="0 0 10 8"><path d="M0.5 1 H9 L4.75 7Z" fill="#333"/></svg>
<div style="position:absolute;left:1859.04px;top:181.80px;font-size:16.76px;line-height:1;white-space:nowrap;transform-origin:0 0;transform:scaleX(0.9601);color:#3c3c3c;font-weight:normal;">INSERT</div>
<svg style="position:absolute;left:1922.5px;top:184px;" width="10" height="8" viewBox="0 0 10 8"><path d="M0.5 1 H9 L4.75 7Z" fill="#333"/></svg>
<div style="position:absolute;left:2024.00px;top:181.80px;font-size:16.76px;line-height:1;white-space:nowrap;transform-origin:0 0;transform:scaleX(0.9657);color:#3c3c3c;font-weight:normal;">SELECT</div>
<svg style="position:absolute;left:2093px;top:184px;" width="10" height="8" viewBox="0 0 10 8"><path d="M0.5 1 H9 L4.75 7Z" fill="#333"/></svg>
<svg style="position:absolute;left:0px;top:82px;" width="2200" height="123" viewBox="0 0 2200 123"><g transform="translate(200,30) scale(0.077640)">
<g fill="#5f5f5f"><rect x="70" y="135" width="60" height="55"/><rect x="595" y="135" width="55" height="55"/><rect x="70" y="655" width="60" height="60"/>
<rect x="205" y="270" width="60" height="55"/><rect x="455" y="270" width="60" height="55"/><rect x="205" y="520" width="60" height="58"/></g>
<path d="M155 160 H570 M97 210 V630 M622 210 V480 M155 687 H415 M285 297 H435 M235 345 V500 M490 350 Q470 520 285 560" stroke="#5f5f5f" stroke-width="14" fill="none"/>
<rect x="515" y="485" width="75" height="270" fill="#22ad4b"/><rect x="415" y="580" width="275" height="75" fill="#22ad4b"/>
<polygon points="920,675 1270,675 1270,750 920,750" fill="#b4b4b4"/><polygon points="1270,675 1385,560 1385,635 1270,750" fill="#a0a0a0"/>
<rect x="920" y="255" width="350" height="400" fill="#69afe5"/>
<polygon points="920,255 1040,140 1385,140 1270,255" fill="#8dcbf8"/><polygon points="1270,255 1385,140 1385,540 1270,655" fill="#4a93cd"/>
<path d="M1450 220 V630" stroke="#333" stroke-width="16"/><polygon points="1405,230 1450,150 1500,230" fill="#333"/>
<polygon points="1740,260 1860,145 2345,145 2240,260" fill="#f5f5f5" stroke="#5f5f5f" stroke-width="14" stroke-linejoin="round"/>
<polygon points="2240,260 2345,145 2345,645 2240,750" fill="#b9b9b9" stroke="#5f5f5f" stroke-width="14" stroke-linejoin="round"/>
<rect x="1740" y="260" width="500" height="490" fill="#dadada" stroke="#5f5f5f" stroke-width="14" stroke-linejoin="round"/>
<circle cx="2000" cy="495" r="155" fill="#f4f4f4" stroke="#5f5f5f" stroke-width="14"/>
<clipPath id="hc"><circle cx="2000" cy="495" r="122"/></clipPath>
<g clip-path="url(#hc)"><circle cx="2000" cy="495" r="122" fill="#69afe5" stroke="#4a93cd" stroke-width="8"/><circle cx="2100" cy="370" r="135" fill="#f4f4f4"/></g>
</g><g transform="translate(390,30) scale(0.077640)">
<path d="M2589 130 V1110" stroke="#cfcfcf" stroke-width="14"/>
<rect x="120" y="175" width="125" height="125" fill="#f6f6f6" stroke="#5f5f5f" stroke-width="14"/>
<g fill="#64ade4"><rect x="520" y="170" width="135" height="135"/><rect x="115" y="580" width="135" height="135"/><rect x="520" y="580" width="135" height="135"/></g>
<path d="M275 240 H500 M183 330 V555 M275 648 H500" stroke="#5f5f5f" stroke-width="14"/>
<path d="M1520 275 Q1250 60 1000 255" stroke="#333" stroke-width="16" fill="none"/><polygon points="955,295 980,200 1045,268" fill="#333"/>
<path d="M945 395 Q1250 150 1545 380 L1430 520 Q1250 340 1060 495Z" fill="#8dcbf8"/>
<path d="M1060 495 Q1250 340 1430 520 L1430 680 Q1250 540 1060 690Z" fill="#69afe5"/>
<polygon points="945,395 1060,495 1060,690 945,585" fill="#4a93cd"/>
<polygon points="1455,505 1555,405 1555,580 1455,680" fill="#fff" stroke="#5f5f5f" stroke-width="14"/>
<path d="M1790 380 Q1790 250 1900 185 H2095 L2350 440 V590 Q2350 640 2300 690 L2230 745 H1990 Q1790 745 1790 600Z" fill="#b78cf2" stroke="#8c62c9" stroke-width="14"/>
<path d="M1800 360 Q1830 230 1930 190 H2090 L2130 340 H1810Z" fill="#d2b3ff"/>
<rect x="1820" y="350" width="360" height="360" rx="50" fill="#a87ae6"/>
<path d="M1790 510 Q2000 560 2260 505 M1980 200 Q1975 450 1985 740" stroke="#8c62c9" stroke-width="10" fill="none" opacity="0.7"/>
<polygon points="2230.0,140.0 2253.7,242.7 2343.1,186.9 2287.3,276.3 2390.0,300.0 2287.3,323.7 2343.1,413.1 2253.7,357.3 2230.0,460.0 2206.3,357.3 2116.9,413.1 2172.7,323.7 2070.0,300.0 2172.7,276.3 2116.9,186.9 2206.3,242.7" fill="#f5a300"/>
</g><g transform="translate(620,30) scale(0.077640)">
<path d="M330 230 Q400 330 520 350 Q570 355 620 350 Q740 330 790 270" stroke="#64ade4" stroke-width="95" fill="none" stroke-linecap="round"/>
<path d="M470 340 Q540 430 545 580 M680 330 Q600 430 585 580" stroke="#64ade4" stroke-width="85" fill="none"/>
<polygon points="530,385 615,385 570,490" fill="#f2f2f2"/>
<circle cx="565" cy="650" r="95" fill="#64ade4"/>
<circle cx="565" cy="650" r="72" fill="#fff" stroke="#5f5f5f" stroke-width="14"/><circle cx="565" cy="650" r="28" fill="none" stroke="#5f5f5f" stroke-width="14"/>
<rect x="290" y="145" width="120" height="120" fill="#f4f4f4" stroke="#5f5f5f" stroke-width="14"/>
<polygon points="810,185 890,300 790,350 728,290 740,225" fill="#f4f4f4" stroke="#5f5f5f" stroke-width="14"/>
<path d="M1540 130 V1110" stroke="#cfcfcf" stroke-width="14"/>
<rect x="1808" y="258" width="100" height="485" fill="#dadada"/>
<path d="M1905 745 H1795 V255 L1910 145 H2000" stroke="#5f5f5f" stroke-width="14" fill="none"/>
<rect x="1930" y="255" width="170" height="490" fill="#69afe5"/>
<polygon points="1930,255 2040,140 2215,140 2100,255" fill="#8dcbf8"/><polygon points="2100,255 2215,140 2215,635 2100,745" fill="#4a93cd"/>
<rect x="2160" y="400" width="80" height="70" fill="#fff"/>
<path d="M2180 432 H2290" stroke="#333" stroke-width="18"/><polygon points="2275,388 2352,432 2275,478" fill="#333"/>
</g><g transform="translate(810,30) scale(0.077640)">
<polygon points="175,285 305,150 465,150 380,270" fill="#f5f5f5"/>
<path d="M175 290 H380 Q620 300 620 560 V740 H175Z" fill="#dadada"/>
<polygon points="625,580 765,440 765,600 625,740" fill="#b9b9b9"/>
<path d="M465 145 H305 L160 285 V745 H625 L770 600 V430" stroke="#5f5f5f" stroke-width="14" fill="none"/>
<path d="M380 265 L510 140 Q740 200 770 400 L640 520 Q610 300 380 265Z" fill="#64ade4"/>
<polygon points="990,285 1135,145 1595,145 1455,285" fill="#f5f5f5" stroke="#5f5f5f" stroke-width="14" stroke-linejoin="round"/>
<polygon points="1455,285 1595,145 1595,600 1455,745" fill="#b9b9b9" stroke="#5f5f5f" stroke-width="14" stroke-linejoin="round"/>
<rect x="990" y="285" width="465" height="460" fill="#dadada" stroke="#5f5f5f" stroke-width="14" stroke-linejoin="round"/>
<rect x="1040" y="345" width="350" height="345" fill="#f4f4f4"/>
<polygon points="1065,370 1210,370 1210,525 1065,665" fill="#4a93cd"/><polygon points="1065,665 1200,530 1365,530 1365,665" fill="#8dcbf8"/>
<polygon points="1820,410 1900,330 2010,330 2010,215 2090,140 2430,140 2430,480 2355,555 2240,555 2240,680 2165,750 1820,750" fill="#69afe5"/>
<polygon points="1820,410 1900,330 2010,330 2010,410" fill="#8dcbf8"/><polygon points="2010,215 2090,140 2430,140 2355,215" fill="#8dcbf8"/>
<polygon points="2355,215 2430,140 2430,480 2355,555" fill="#4a93cd"/><polygon points="2165,555 2240,555 2240,680 2165,750" fill="#4a93cd"/>
</g><g transform="translate(1000,30) scale(0.077640)">
<rect x="240" y="255" width="410" height="185" fill="#69afe5"/>
<polygon points="240,255 355,140 780,140 650,255" fill="#8dcbf8"/><polygon points="650,255 780,140 775,320 650,440" fill="#4a93cd"/>
<path d="M200 490 H665 L815 340" stroke="#1e8ee6" stroke-width="18" fill="none"/>
<rect x="250" y="545" width="415" height="175" fill="#dadada"/><polygon points="665,545 770,460 770,620 665,720" fill="#b9b9b9"/>
<path d="M245 545 V725 H665 L775 620 V460" stroke="#5f5f5f" stroke-width="14" fill="none"/>
<path d="M1180 440 H1500 M1340 285 V600" stroke="#333" stroke-width="40"/>
<polygon points="1245,285 1340,140 1435,285" fill="#333"/><polygon points="1245,600 1340,745 1435,600" fill="#333"/>
<polygon points="1185,350 1035,440 1185,540" fill="#333"/><polygon points="1495,350 1645,440 1495,540" fill="#333"/>
<path d="M1840 130 V1110" stroke="#cfcfcf" stroke-width="14"/>
</g><g transform="translate(1150,30) scale(0.077640)">
<rect x="150" y="520" width="230" height="225" fill="#dadada" stroke="#5f5f5f" stroke-width="14" stroke-linejoin="round"/>
<polygon points="380,520 460,450 680,450 605,520" fill="#f5f5f5" stroke="#5f5f5f" stroke-width="14"/>
<rect x="380" y="520" width="225" height="225" fill="#dadada" stroke="#5f5f5f" stroke-width="14" stroke-linejoin="round"/>
<polygon points="605,520 680,450 680,670 605,745" fill="#b9b9b9" stroke="#5f5f5f" stroke-width="14" stroke-linejoin="round"/>
<rect x="145" y="290" width="235" height="230" fill="#69afe5"/>
<polygon points="145,290 225,210 450,210 380,290" fill="#8dcbf8"/><polygon points="380,290 450,210 450,440 380,520" fill="#4a93cd"/>
<rect x="420" y="270" width="60" height="60" fill="#f2f2f2"/>
<polygon points="595.0,140.0 618.0,244.6 708.1,186.9 650.4,277.0 755.0,300.0 650.4,323.0 708.1,413.1 618.0,355.4 595.0,460.0 572.0,355.4 481.9,413.1 539.6,323.0 435.0,300.0 539.6,277.0 481.9,186.9 572.0,244.6" fill="#f5a300"/>
<path d="M1020 330 L1140 210 Q1200 170 1250 205 V395 Q1220 420 1160 405 V590 L1030 690 Q1015 690 1020 670Z" fill="#bdbdbd" stroke="#5f5f5f" stroke-width="14"/>
<rect x="1145" y="205" width="105" height="200" fill="#dcdcdc"/><ellipse cx="1195" cy="215" rx="25" ry="12" fill="#5f5f5f"/>
<path d="M1195 430 V515" stroke="#1e8ee6" stroke-width="16"/>
<path d="M1410 230 Q1425 215 1440 225 L1545 330 V690 Q1530 710 1510 700 L1410 590Z" fill="#dcdcdc" stroke="#5f5f5f" stroke-width="14"/>
<path d="M1310 380 Q1360 340 1410 380 V580 Q1360 610 1310 570Z" fill="#bdbdbd" stroke="#5f5f5f" stroke-width="14"/>
<ellipse cx="1360" cy="385" rx="45" ry="25" fill="#eee"/>
<path d="M1368 290 V395" stroke="#1e8ee6" stroke-width="16"/>
<rect x="1810" y="140" width="120" height="125" fill="#64ade4" stroke="#3f8fd0" stroke-width="10"/>
<rect x="1810" y="265" width="120" height="115" fill="#f6f6f6" stroke="#5f5f5f" stroke-width="14" stroke-linejoin="round"/><rect x="1930" y="258" width="110" height="122" fill="#f6f6f6" stroke="#5f5f5f" stroke-width="14" stroke-linejoin="round"/>
<path d="M1910 410 V710 M1915 470 H2050 M1915 570 H2050 M1915 665 H2050" stroke="#8a8a8a" stroke-width="14"/>
<rect x="2100" y="300" width="315" height="440" fill="#fff" stroke="#5f5f5f" stroke-width="14" stroke-linejoin="round"/><rect x="2100" y="300" width="315" height="55" fill="#6b6b6b"/>
<path d="M2105 435 H2410 M2105 515 H2410 M2105 590 H2410 M2105 665 H2410 M2200 355 V740" stroke="#6b6b6b" stroke-width="14"/>
</g><g transform="translate(1350,30) scale(0.077640)">
<path d="M38 130 V1110 M2045 130 V1110" stroke="#cfcfcf" stroke-width="14"/>
<polygon points="330,270 465,135 870,135 735,270" fill="#f5f5f5" stroke="#a8a8a8" stroke-width="10"/>
<polygon points="735,270 870,135 870,540 735,675" fill="#b9b9b9" stroke="#a8a8a8" stroke-width="10"/>
<rect x="330" y="270" width="405" height="405" rx="15" fill="#dadada" stroke="#a8a8a8" stroke-width="10"/>
<path d="M680 578 H945 M680 693 H945 M870 640 V750" stroke="#666" stroke-width="36"/><rect x="735" y="520" width="40" height="115" rx="10" fill="#1e8ee6"/>
<rect x="1160" y="135" width="578" height="555" fill="#f2f2f2" stroke="#6b6b6b" stroke-width="18"/>
<rect x="1160" y="135" width="578" height="110" fill="#6b6b6b"/><rect x="1200" y="175" width="75" height="35" fill="#f2f2f2"/>
<rect x="1225" y="318" width="445" height="290" fill="none" stroke="#6b6b6b" stroke-width="18"/>
<path d="M1225 410 H1670 M1225 510 H1670 M1320 318 V608 M1420 318 V608" stroke="#6b6b6b" stroke-width="18"/>
<rect x="1490" y="530" width="300" height="240" fill="#f2f2f2"/>
<path d="M1510 578 H1775 M1510 693 H1775 M1700 640 V750" stroke="#666" stroke-width="36"/><rect x="1562" y="520" width="40" height="115" rx="10" fill="#1e8ee6"/>
</g><g transform="translate(1550,30) scale(0.077640)">
<rect x="222" y="310" width="140" height="412" fill="#dadada"/>
<path d="M360 725 H210 V310 L385 145 H515" stroke="#5f5f5f" stroke-width="16" fill="none"/>
<polygon points="380,305 550,145 552,560 380,725" fill="#57c47b" stroke="#4cb36e" stroke-width="8"/>
<polygon points="612,305 782,145 784,560 612,725" fill="#e59a62" stroke="#d8895a" stroke-width="8"/>
<path d="M1480 130 V1110" stroke="#cfcfcf" stroke-width="14"/>
</g><g transform="translate(1700,30) scale(0.077640)">
<path d="M118 290 V460 M640 290 V460 M150 378 H600" stroke="#6b6b6b" stroke-width="16"/>
<polygon points="135,378 205,330 205,425" fill="#6b6b6b"/><polygon points="625,378 555,330 555,425" fill="#6b6b6b"/>
<rect x="110" y="480" width="535" height="118" fill="#ffa800" stroke="#f0a000" stroke-width="6"/>
<path d="M195 485 V540 M310 485 V540 M430 485 V540 M545 485 V540 M138 485 V515 M255 485 V515 M370 485 V515 M490 485 V515 M605 485 V515" stroke="#6b6b6b" stroke-width="12"/>
<path d="M1170 130 V1110" stroke="#cfcfcf" stroke-width="14"/>
<path d="M1505 335 L1545 300 M1490 360 V705 H1690" stroke="#5f5f5f" stroke-width="14" fill="none"/>
<rect x="1498" y="370" width="330" height="330" fill="#dadada"/>
<polygon points="1545,305 1735,218 1975,218 1830,370 1545,370" fill="#f2f2f2"/>
<polygon points="1830,370 1975,230 1975,500 1830,640" fill="#b9b9b9"/>
<path d="M1740 215 H1975 V480" stroke="#5f5f5f" stroke-width="14" fill="none"/>
<polygon points="1405,205 1560,205 1560,140 1745,250 1560,360 1560,290 1405,290" fill="#1e8ee6"/>
<g stroke="#333" stroke-width="45" fill="none" stroke-linecap="round">
<path d="M1800 570 L1760 610 Q1700 680 1760 715 Q1810 740 1860 680 L1890 640"/>
<path d="M1860 620 L1940 540 Q1990 490 1960 520"/>
<path d="M1905 560 L1935 525 Q1990 470 2000 550 Q2000 600 1930 660"/>
</g>
<rect x="2270" y="160" width="320" height="150" rx="30" fill="#8dcbf8"/><rect x="2395" y="160" width="200" height="150" fill="#64ade4"/>
<rect x="2375" y="310" width="220" height="430" fill="#64ade4"/>
<path d="M2375 380 H2576 M2375 420 H2576 M2375 460 H2576 M2375 500 H2576 M2375 540 H2576 M2375 580 H2576 M2375 620 H2576 M2375 660 H2576 M2375 700 H2576" stroke="#8dcbf8" stroke-width="14"/>
</g><g transform="translate(1900,30) scale(0.077640)">
<rect x="0" y="160" width="155" height="145" rx="25" fill="#4a93cd"/><rect x="0" y="310" width="60" height="440" fill="#64ade4"/>
<path d="M0 380 H62 M0 420 H62 M0 460 H62 M0 500 H62 M0 540 H62 M0 700 H62 M0 740 H62" stroke="#8dcbf8" stroke-width="14"/>
<rect x="105" y="485" width="75" height="270" fill="#22ad4b"/><rect x="10" y="580" width="268" height="75" fill="#22ad4b"/>
<rect x="510" y="155" width="560" height="558" fill="#86c8fb" stroke="#3f90d0" stroke-width="12"/>
<path d="M516 525 Q580 410 650 390 Q720 370 790 480 Q850 580 880 580 Q940 500 960 510 Q1010 520 1064 590 V707 H516Z" fill="#4394cc"/>
<circle cx="912" cy="310" r="62" fill="#fffcc8" stroke="#a7d7f8" stroke-width="8"/>
<path d="M1300 130 V1110" stroke="#cfcfcf" stroke-width="14"/>
<rect x="1705" y="78" width="735" height="730" fill="#0a96d8"/>
<path d="M1770 145 H2300 V500 M1770 145 V550 H2150" stroke="#5ee87f" stroke-width="22" stroke-dasharray="75 45" fill="none"/>
<polygon points="2165,415 2380,615 2285,630 2335,725 2265,755 2225,660 2165,690" fill="#fff"/>
</g></svg>
<div style="position:absolute;left:6.2px;top:216.4px;width:448.3px;height:36.1px;background:#f1f1f1;box-sizing:border-box;border:1.3px solid #c6c6c6;border-bottom:2px solid #c0c0c0;"></div>
<svg style="position:absolute;left:12px;top:229px;" width="20" height="13" viewBox="0 0 20 13"><path d="M0.5 6.5 L8 1 V12Z M8 6.5 L15.5 1 V12Z" fill="#333"/></svg>
<div style="position:absolute;left:43.01px;top:227.00px;font-size:16.76px;line-height:1;white-space:nowrap;transform-origin:0 0;transform:scaleX(0.9889);color:#5a5a5a;font-weight:normal;">BROWSER</div>
<svg style="position:absolute;left:423px;top:227px;" width="17" height="17" viewBox="0 0 17 17"><circle cx="8" cy="8" r="7.3" fill="#222"/><rect x="3.8" y="6.9" width="8.4" height="2.3" fill="#f1f1f1"/></svg>
<div style="position:absolute;left:60.0px;top:290.9px;width:230.0px;height:6.4px;background:rgba(255,255,255,0.7);"></div>
<div style="position:absolute;left:87.2px;top:326.7px;width:200.8px;height:6.4px;background:rgba(255,255,255,0.7);"></div>
<div style="position:absolute;left:87.2px;top:362.5px;width:164.8px;height:6.4px;background:rgba(255,255,255,0.7);"></div>
<div style="position:absolute;left:87.2px;top:398.3px;width:147.8px;height:6.4px;background:rgba(255,255,255,0.7);"></div>
<div style="position:absolute;left:87.2px;top:434.8px;width:153.8px;height:6.4px;background:rgba(255,255,255,0.7);"></div>
<div style="position:absolute;left:87.2px;top:470.5px;width:171.8px;height:6.4px;background:rgba(255,255,255,0.7);"></div>
<div style="position:absolute;left:60.1px;top:261.0px;width:167.9px;height:29.9px;background:#f0f0f0;"></div>
<div style="position:absolute;left:97.7px;top:264.0px;width:92.3px;height:23.9px;background:#9a9a9a;"></div>
<svg style="position:absolute;left:30px;top:262px;" width="200" height="28" viewBox="0 0 200 28">
<defs><linearGradient id="tri" x1="0" y1="0" x2="1" y2="1"><stop offset="0" stop-color="#777"/><stop offset="1" stop-color="#000"/></linearGradient>
<linearGradient id="cub" x1="0" y1="0" x2="0" y2="1"><stop offset="0" stop-color="#eef0f4"/><stop offset="1" stop-color="#a9b0bd"/></linearGradient>
<radialGradient id="rad" cx="0.5" cy="0.35" r="0.6"><stop offset="0" stop-color="#fff"/><stop offset="0.7" stop-color="#e6e8ee"/><stop offset="1" stop-color="#8d96a6"/></radialGradient></defs>
<path d="M3.7 18.6 L13.9 8.2 V18.6Z" fill="url(#tri)" stroke="#111" stroke-width="0.8"/>
<path d="M34.4 13.9 Q46.4 2 58.3 13.9 Q46.4 25.8 34.4 13.9Z" fill="#8c8c8c"/><circle cx="46.4" cy="13.9" r="4.2" fill="none" stroke="#f0f0f0" stroke-width="1.5"/>
<path d="M75 7.5 L79 3.2 H93.8 V17 L89.5 22.5 H75Z" fill="url(#cub)" stroke="#444" stroke-width="0.9"/>
<path d="M89.5 7.5 L93.8 3.2 V17 L89.5 22.5Z" fill="#9aa3b2"/><path d="M75 7.5 H89.5 V22.5" fill="none" stroke="#555" stroke-width="0.5"/>
<circle cx="176.8" cy="13" r="9.6" fill="url(#rad)" stroke="#444" stroke-width="1"/><circle cx="176.8" cy="13" r="3.9" fill="#3a3d44"/>
</svg>
<div style="position:absolute;left:146.33px;top:268.30px;font-size:17.18px;line-height:1;white-space:nowrap;transform-origin:0 0;transform:scaleX(0.9674);color:#ffffff;font-weight:bold;">box</div>
<div style="position:absolute;left:87.2px;top:297.3px;width:200.8px;height:29.4px;background:#f0f0f0;"></div>
<div style="position:absolute;left:118.2px;top:297.3px;width:1.0px;height:29.4px;background:#fbfbfb;"></div>
<div style="position:absolute;left:129.98px;top:304.00px;font-size:16.2px;line-height:1;white-space:nowrap;transform-origin:0 0;transform:scaleX(1.0172);color:#2b2b2b;font-weight:normal;">Document Settings</div>
<svg style="position:absolute;left:58px;top:297.3px;" width="120" height="30" viewBox="0 0 120 30"><path d="M3.7 8 L12.4 14.7 L3.7 21.6Z" fill="#fff" stroke="#222" stroke-width="1.3" stroke-linejoin="round"/></svg>
<div style="position:absolute;left:87.2px;top:333.0px;width:164.8px;height:29.5px;background:#f0f0f0;"></div>
<div style="position:absolute;left:124.3px;top:333.0px;width:1.0px;height:29.5px;background:#fbfbfb;"></div>
<div style="position:absolute;left:135.68px;top:339.70px;font-size:16.2px;line-height:1;white-space:nowrap;transform-origin:0 0;transform:scaleX(1.0185);color:#2b2b2b;font-weight:normal;">Named Views</div>
<svg style="position:absolute;left:58px;top:333px;" width="120" height="30" viewBox="0 0 120 30"><path d="M3.7 8 L12.4 14.8 L3.7 21.6Z" fill="#fff" stroke="#222" stroke-width="1.3" stroke-linejoin="round"/></svg>
<div style="position:absolute;left:87.2px;top:369.3px;width:147.8px;height:29.0px;background:#f0f0f0;"></div>
<div style="position:absolute;left:124.3px;top:369.3px;width:1.0px;height:29.0px;background:#fbfbfb;"></div>
<div style="position:absolute;left:164.6px;top:369.3px;width:1.0px;height:29.0px;background:#fbfbfb;"></div>
<div style="position:absolute;left:174.70px;top:376.00px;font-size:16.2px;line-height:1;white-space:nowrap;transform-origin:0 0;transform:scaleX(1.0029);color:#2b2b2b;font-weight:normal;">Origin</div>
<svg style="position:absolute;left:58px;top:369.3px;" width="120" height="30" viewBox="0 0 120 30"><path d="M3.7 8 L12.4 14.5 L3.7 21.6Z" fill="#fff" stroke="#222" stroke-width="1.3" stroke-linejoin="round"/></svg>
<div style="position:absolute;left:87.2px;top:405.0px;width:153.8px;height:29.8px;background:#f0f0f0;"></div>
<div style="position:absolute;left:124.3px;top:405.0px;width:1.0px;height:29.8px;background:#fbfbfb;"></div>
<div style="position:absolute;left:164.6px;top:405.0px;width:1.0px;height:29.8px;background:#fbfbfb;"></div>
<div style="position:absolute;left:173.69px;top:411.70px;font-size:16.2px;line-height:1;white-space:nowrap;transform-origin:0 0;transform:scaleX(1.0144);color:#2b2b2b;font-weight:normal;">Bodies</div>
<svg style="position:absolute;left:58px;top:405px;" width="120" height="30" viewBox="0 0 120 30"><path d="M3.7 8 L12.4 14.9 L3.7 21.6Z" fill="#fff" stroke="#222" stroke-width="1.3" stroke-linejoin="round"/></svg>
<div style="position:absolute;left:87.2px;top:441.0px;width:171.8px;height:29.5px;background:#f0f0f0;"></div>
<div style="position:absolute;left:124.3px;top:441.0px;width:1.0px;height:29.5px;background:#fbfbfb;"></div>
<div style="position:absolute;left:164.6px;top:441.0px;width:1.0px;height:29.5px;background:#fbfbfb;"></div>
<div style="position:absolute;left:174.70px;top:447.70px;font-size:16.2px;line-height:1;white-space:nowrap;transform-origin:0 0;transform:scaleX(1.0047);color:#2b2b2b;font-weight:normal;">Sketches</div>
<svg style="position:absolute;left:58px;top:441px;" width="120" height="30" viewBox="0 0 120 30"><path d="M3.7 8 L12.4 14.8 L3.7 21.6Z" fill="#fff" stroke="#222" stroke-width="1.3" stroke-linejoin="round"/></svg>
<svg style="position:absolute;left:0px;top:0px;pointer-events:none;" width="300" height="480" viewBox="0 0 300 480"><g transform="translate(101.8,312)" fill="#8a8a8a"><rect x="-2.3" y="-10" width="4.6" height="5" transform="rotate(0)"/><rect x="-2.3" y="-10" width="4.6" height="5" transform="rotate(45)"/><rect x="-2.3" y="-10" width="4.6" height="5" transform="rotate(90)"/><rect x="-2.3" y="-10" width="4.6" height="5" transform="rotate(135)"/><rect x="-2.3" y="-10" width="4.6" height="5" transform="rotate(180)"/><rect x="-2.3" y="-10" width="4.6" height="5" transform="rotate(225)"/><rect x="-2.3" y="-10" width="4.6" height="5" transform="rotate(270)"/><rect x="-2.3" y="-10" width="4.6" height="5" transform="rotate(315)"/><circle r="7.2"/><circle r="3.2" fill="#f0f0f0"/></g><path d="M91.4 338.1 h10.7 v2 h13.5 v17.7 h-24.2Z" fill="#9a9a9a"/><rect x="91.4" y="341.0" width="24.2" height="1.2" fill="#f0f0f0"/><path d="M92.6 384.2 Q103.6 373.2 114.6 384.2 Q103.6 395.2 92.6 384.2Z" fill="none" stroke="#8c8c8c" stroke-width="1.7"/><circle cx="103.6" cy="384.2" r="4.3" fill="none" stroke="#8c8c8c" stroke-width="1.6"/><path d="M96.6 376.2 L111.1 392.2" stroke="#8c8c8c" stroke-width="1.8"/><path d="M129 374.2 h10.7 v2 h13.5 v17.7 h-24.2Z" fill="#9a9a9a"/><rect x="129" y="377.09999999999997" width="24.2" height="1.2" fill="#f0f0f0"/><path d="M91.6 420 Q103.6 408 115.6 420 Q103.6 432 91.6 420Z" fill="#8c8c8c"/><circle cx="103.6" cy="420" r="4.2" fill="none" stroke="#f0f0f0" stroke-width="1.5"/><path d="M129 410 h10.7 v2 h13.5 v17.7 h-24.2Z" fill="#9a9a9a"/><rect x="129" y="412.9" width="24.2" height="1.2" fill="#f0f0f0"/><path d="M91.6 456 Q103.6 444 115.6 456 Q103.6 468 91.6 456Z" fill="#8c8c8c"/><circle cx="103.6" cy="456" r="4.2" fill="none" stroke="#f0f0f0" stroke-width="1.5"/><path d="M129 446 h10.7 v2 h13.5 v17.7 h-24.2Z" fill="#9a9a9a"/><rect x="129" y="448.9" width="24.2" height="1.2" fill="#f0f0f0"/></svg>
<svg style="position:absolute;left:3700px;top:205px;" width="140" height="140" viewBox="0 0 140 140">
<path d="M22 24 L31.5 13 L41 24 M24.5 22 V30 H39 V22" fill="none" stroke="#666" stroke-width="1.2"/><rect x="30" y="23" width="3" height="7" fill="#666"/>
<defs><linearGradient id="cb" x1="0" y1="0" x2="0" y2="1"><stop offset="0" stop-color="#c9c9c9"/><stop offset="1" stop-color="#adadad"/></linearGradient></defs>
<path d="M46.4 56 Q47 45 52 42 Q58 41 95 37.5 L99.5 49 L106.3 97.6 L54 102.4 Z" fill="url(#cb)" stroke="#666" stroke-width="0.8" stroke-dasharray="3 1.5"/>
<path d="M46.4 56 L99.5 49" stroke="#777" stroke-width="0.8"/>
<path d="M58 53 L90 47.5 V75 L63 92Z" fill="#9aa2ae" opacity="0.8"/>
<path d="M57 52 L90 47 V60 L57 64Z" fill="#93a9c2" stroke="#1f6fd0" stroke-width="1.2"/>
<text x="77" y="84" font-size="11.5" font-weight="bold" fill="#3d4350" text-anchor="middle" transform="rotate(-9 77 80)" font-family="Liberation Sans">BOTTOM</text>
<text x="74" y="48" font-size="5" font-weight="bold" fill="#444" text-anchor="middle" transform="rotate(-7 74 46)" font-family="Liberation Sans">BACK</text>
<path d="M100.5 40.6 L106.5 99" stroke="#16d916" stroke-width="2"/>
<path d="M47.3 105.3 L106.3 99" stroke="#ff1a1a" stroke-width="2.2"/>
<text x="99" y="37" font-size="11" fill="#16d916" text-anchor="middle" font-family="Liberation Sans">Y</text>
<text x="39.5" y="316" font-size="11" fill="#ff1a1a" text-anchor="middle" font-family="Liberation Sans" transform="translate(0,-205)">X</text>
<path d="M116.5 108.5 H129 V112 L122.7 119 L116.5 112Z M117 111.5 H128.5" fill="none" stroke="#777" stroke-width="1"/>
</svg>
<div style="position:absolute;left:3347.5px;top:336.4px;width:486.0px;height:1002.7px;background:#ffffff;box-sizing:border-box;border:1.3px solid #c8c8c8;"></div>
<div style="position:absolute;left:3347.5px;top:336.4px;width:486.0px;height:35.6px;background:#f1f1f1;box-sizing:border-box;border:1.3px solid #c8c8c8;border-bottom:2px solid #c4c4c4;"></div>
<div style="position:absolute;left:3348.8px;top:372.0px;width:483.4px;height:4.0px;background:#ececec;"></div>
<div style="position:absolute;left:3347.5px;top:1286.0px;width:486.0px;height:53.1px;background:#f1f1f1;box-sizing:border-box;border:1.3px solid #c8c8c8;border-top:1.6px solid #c4c4c4;"></div>
<svg style="position:absolute;left:3363px;top:346px;" width="18" height="18" viewBox="0 0 18 18"><circle cx="8.7" cy="8.6" r="7" fill="#222"/><rect x="4.6" y="7.5" width="8.2" height="2.2" fill="#f1f1f1"/></svg>
<div style="position:absolute;left:3385.00px;top:346.40px;font-size:17.32px;line-height:1;white-space:nowrap;transform-origin:0 0;transform:scaleX(0.9485);color:#666;font-weight:normal;">QUICK SETUP</div>
<svg style="position:absolute;left:3808px;top:348px;" width="22" height="14" viewBox="0 0 22 14"><path d="M3.8 1.5 L11 7 L3.8 12.5Z M11 1.5 L18.5 7 L11 12.5Z" fill="#222"/></svg>
<svg style="position:absolute;left:3366px;top:391px;" width="30" height="30" viewBox="0 0 30 30"><circle cx="14.2" cy="15.4" r="13.6" fill="#ef8a0e"/></svg>
<div style="position:absolute;left:3375.50px;top:398.60px;font-size:17.04px;line-height:1;white-space:nowrap;transform-origin:0 0;transform:scaleX(1.0000);color:#ffffff;font-weight:normal;">1</div>
<svg style="position:absolute;left:3366px;top:529px;" width="30" height="30" viewBox="0 0 30 30"><circle cx="14.2" cy="15.6" r="13.6" fill="#ef8a0e"/></svg>
<div style="position:absolute;left:3375.50px;top:536.80px;font-size:17.04px;line-height:1;white-space:nowrap;transform-origin:0 0;transform:scaleX(1.0000);color:#ffffff;font-weight:normal;">2</div>
<svg style="position:absolute;left:3366px;top:931px;" width="30" height="30" viewBox="0 0 30 30"><circle cx="14.2" cy="15.4" r="13.6" fill="#ef8a0e"/></svg>
<div style="position:absolute;left:3375.50px;top:938.60px;font-size:17.04px;line-height:1;white-space:nowrap;transform-origin:0 0;transform:scaleX(1.0000);color:#ffffff;font-weight:normal;">3</div>
<div style="position:absolute;left:3402.70px;top:399.00px;font-size:18.72px;line-height:1;white-space:nowrap;transform-origin:0 0;transform:scaleX(0.8726);color:#111;font-weight:bold;">SETUP</div>
<div style="position:absolute;left:3365.69px;top:435.80px;font-size:17.88px;line-height:1;white-space:nowrap;transform-origin:0 0;transform:scaleX(1.0098);color:#111;font-weight:normal;">Default Units</div>
<div style="position:absolute;left:3541.0px;top:429.5px;width:224.8px;height:26.3px;background:#e3e3e3;"></div>
<div style="position:absolute;left:3742.0px;top:429.5px;width:23.8px;height:26.3px;background:#e8e8e8;box-sizing:border-box;border-top:1.5px solid #fff;border-left:1.5px solid #fff;border-right:2px solid #555;border-bottom:2px solid #555;"></div>
<svg style="position:absolute;left:3750px;top:439.5px;" width="14" height="9" viewBox="0 0 14 9"><path d="M0.5 0.5 H12 L6.25 7Z" fill="#111"/></svg>
<div style="position:absolute;left:3562.50px;top:435.80px;font-size:17.88px;line-height:1;white-space:nowrap;transform-origin:0 0;transform:scaleX(0.9813);color:#111;font-weight:normal;">cm</div>
<div style="position:absolute;left:3366.00px;top:469.60px;font-size:17.88px;line-height:1;white-space:nowrap;transform-origin:0 0;transform:scaleX(0.9993);color:#111;font-weight:normal;">New documents will use</div>
<div style="position:absolute;left:3564.00px;top:469.60px;font-size:17.88px;line-height:1;white-space:nowrap;transform-origin:0 0;transform:scaleX(0.9425);color:#111;font-weight:bold;">cm</div>
<div style="position:absolute;left:3594.00px;top:469.60px;font-size:17.88px;line-height:1;white-space:nowrap;transform-origin:0 0;transform:scaleX(1.0135);color:#111;font-weight:normal;">as their default unit.</div>
<div style="position:absolute;left:3402.05px;top:536.40px;font-size:18.72px;line-height:1;white-space:nowrap;transform-origin:0 0;transform:scaleX(0.9545);color:#111;font-weight:bold;">NAVIGATE &amp; VIEW</div>
<div style="position:absolute;left:3365.99px;top:571.70px;font-size:17.88px;line-height:1;white-space:nowrap;transform-origin:0 0;transform:scaleX(1.0130);color:#111;font-weight:normal;">Maneuver your model using familiar controls.</div>
<div style="position:absolute;left:3366.70px;top:607.00px;font-size:17.88px;line-height:1;white-space:nowrap;transform-origin:0 0;transform:scaleX(0.9448);color:#111;font-weight:normal;">CAD Experience</div>
<div style="position:absolute;left:3541.0px;top:600.6px;width:224.8px;height:26.4px;background:#e3e3e3;"></div>
<div style="position:absolute;left:3742.0px;top:600.6px;width:23.8px;height:26.4px;background:#e8e8e8;box-sizing:border-box;border-top:1.5px solid #fff;border-left:1.5px solid #fff;border-right:2px solid #555;border-bottom:2px solid #555;"></div>
<svg style="position:absolute;left:3750px;top:610.6px;" width="14" height="9" viewBox="0 0 14 9"><path d="M0.5 0.5 H12 L6.25 7Z" fill="#111"/></svg>
<div style="position:absolute;left:3561.51px;top:607.00px;font-size:17.88px;line-height:1;white-space:nowrap;transform-origin:0 0;transform:scaleX(0.9912);color:#111;font-weight:normal;">New to CAD</div>
<div style="position:absolute;left:3742.49px;top:673.80px;font-size:17.88px;line-height:1;white-space:nowrap;transform-origin:0 0;transform:scaleX(1.0062);color:#111;font-weight:normal;">Mouse</div>
<div style="position:absolute;left:3366.10px;top:718.80px;font-size:17.88px;line-height:1;white-space:nowrap;transform-origin:0 0;transform:scaleX(0.9047);color:#111;font-weight:normal;">Pan</div>
<div style="position:absolute;left:3367.0px;top:759.0px;width:430.0px;height:2.0px;background:#9a9a9a;"></div>
<div style="position:absolute;left:3367.00px;top:789.80px;font-size:17.88px;line-height:1;white-space:nowrap;transform-origin:0 0;transform:scaleX(1.0050);color:#111;font-weight:normal;">Zoom</div>
<div style="position:absolute;left:3367.0px;top:830.0px;width:430.0px;height:2.0px;background:#9a9a9a;"></div>
<div style="position:absolute;left:3367.00px;top:859.30px;font-size:17.88px;line-height:1;white-space:nowrap;transform-origin:0 0;transform:scaleX(1.0325);color:#111;font-weight:normal;">Orbit</div>
<div style="position:absolute;left:3656.0px;top:854.0px;width:69.0px;height:27.2px;background:#e8e8e8;box-sizing:border-box;border:1.3px solid #cfcfcf;"></div>
<div style="position:absolute;left:3667.00px;top:861.00px;font-size:15.36px;line-height:1;white-space:nowrap;transform-origin:0 0;transform:scaleX(1.0225);color:#555;font-weight:normal;">SHIFT</div>
<div style="position:absolute;left:3734.50px;top:864.00px;font-size:13.97px;line-height:1;white-space:nowrap;transform-origin:0 0;transform:scaleX(0.8750);color:#555;font-weight:normal;">+</div>
<svg style="position:absolute;left:3700px;top:690px;" width="120" height="210" viewBox="0 0 120 210"><path d="M62 20 Q62 15 67 15 L75 14" fill="none" stroke="#444" stroke-width="1"/>
<defs><linearGradient id="mg14" x1="0" y1="0" x2="0" y2="1"><stop offset="0" stop-color="#f4f6fa"/><stop offset="1" stop-color="#8d94a2"/></linearGradient></defs>
<rect x="49" y="21" width="26" height="37" rx="13" fill="url(#mg14)" stroke="#3b3b3b" stroke-width="1.1"/>
<path d="M49 35 H75 M62 21 V35" stroke="#3b3b3b" stroke-width="0.9"/>
<rect x="59.5" y="24" width="5" height="8" rx="2.5" fill="#2f8ff0" stroke="#1c4f90" stroke-width="0.7"/><path d="M62 91 Q62 86 67 86 L75 85" fill="none" stroke="#444" stroke-width="1"/>
<defs><linearGradient id="mg85" x1="0" y1="0" x2="0" y2="1"><stop offset="0" stop-color="#f4f6fa"/><stop offset="1" stop-color="#8d94a2"/></linearGradient></defs>
<rect x="49" y="92" width="26" height="37" rx="13" fill="url(#mg85)" stroke="#3b3b3b" stroke-width="1.1"/>
<path d="M49 106 H75 M62 92 V106" stroke="#3b3b3b" stroke-width="0.9"/>
<rect x="59.5" y="95" width="5" height="8" rx="2.5" fill="#2f8ff0" stroke="#1c4f90" stroke-width="0.7"/><path d="M40 91 V106 M37 94 L40 90 L43 94 M37 103 L40 107 L43 103" stroke="#333" stroke-width="1.3" fill="none"/><path d="M64 160 Q64 155 69 155 L77 154" fill="none" stroke="#444" stroke-width="1"/>
<defs><linearGradient id="mg154" x1="0" y1="0" x2="0" y2="1"><stop offset="0" stop-color="#f4f6fa"/><stop offset="1" stop-color="#8d94a2"/></linearGradient></defs>
<rect x="51" y="161" width="26" height="37" rx="13" fill="url(#mg154)" stroke="#3b3b3b" stroke-width="1.1"/>
<path d="M51 175 H77 M64 161 V175" stroke="#3b3b3b" stroke-width="0.9"/>
<rect x="61.5" y="164" width="5" height="8" rx="2.5" fill="#2f8ff0" stroke="#1c4f90" stroke-width="0.7"/></svg>
<div style="position:absolute;left:3402.08px;top:938.00px;font-size:18.72px;line-height:1;white-space:nowrap;transform-origin:0 0;transform:scaleX(0.9218);color:#111;font-weight:bold;">LEARN BY DOING</div>
<div style="position:absolute;left:3367.00px;top:973.80px;font-size:17.88px;line-height:1;white-space:nowrap;transform-origin:0 0;transform:scaleX(1.0073);color:#111;font-weight:normal;">Start mastering Fusion with guided tutorials.</div>
<div style="position:absolute;left:3476.0px;top:1002.3px;width:209.8px;height:52.2px;background:#fb8a05;"></div>
<div style="position:absolute;left:3525.50px;top:1019.50px;font-size:20.25px;line-height:1;white-space:nowrap;transform-origin:0 0;transform:scaleX(0.8778);color:#ffffff;font-weight:normal;">START HERE</div>
<div style="position:absolute;left:3727.0px;top:1299.5px;width:89.2px;height:29.0px;background:#e7e7e7;box-sizing:border-box;border:1.4px solid #adadad;"></div>
<div style="position:absolute;left:3749.00px;top:1305.80px;font-size:17.6px;line-height:1;white-space:nowrap;transform-origin:0 0;transform:scaleX(1.0137);color:#666;font-weight:normal;">Close</div>
<div style="position:absolute;left:1743.3px;top:1968.3px;width:355.6px;height:35.3px;background:#f1f1f1;"></div>
<svg style="position:absolute;left:1720px;top:1950px;" width="400" height="70" viewBox="0 0 400 70">
<g fill="#1a1a1a">
<path d="M59 30 H67 L63 35Z M227 30 H235 L231 35Z M272 30 H280 L276 35Z M318 30 H326 L322 35Z M365 30 H373 L369 35Z"/>
</g>
<defs><linearGradient id="ng" x1="0" y1="0" x2="0" y2="1"><stop offset="0" stop-color="#fafafa"/><stop offset="1" stop-color="#c5c5c5"/></linearGradient>
<linearGradient id="nb" x1="0" y1="0" x2="0" y2="1"><stop offset="0" stop-color="#a9c8ee"/><stop offset="1" stop-color="#6d98cf"/></linearGradient></defs>
<path d="M37.5 46 V33 L35 33 L39.6 23.5 L44.2 33 L41.7 33 V46Z" fill="url(#ng)" stroke="#555" stroke-width="0.9"/>
<ellipse cx="39.6" cy="36.5" rx="11" ry="4.5" fill="none" stroke="#333" stroke-width="1.1"/>
<path d="M29 37 L32 40 M29 37 L33 35" stroke="#333" stroke-width="1.1"/>
<rect x="78.5" y="31.5" width="21" height="13.5" rx="1.5" fill="url(#ng)" stroke="#666" stroke-width="0.9"/>
<rect x="82" y="35" width="14" height="6" fill="#9a9a9a"/>
<path d="M82 31 L86 27 L87 31 M88 31 L93 27.5 L93.5 31" stroke="#666" stroke-width="0.9" fill="#ccc"/>
<path d="M121 40 Q118 36 118 34 Q119 32.5 121 34 L123 36 V27 Q124 25 125.5 27 V32 V25 Q127 23 128.5 25 V32 V25.5 Q130 24 131.5 26 V32.5 V28 Q133 26.5 134.5 28.5 V38 Q134 45 128 45 Q124 45 121 40Z" fill="#f7f7f7" stroke="#444" stroke-width="0.9"/>
<circle cx="164.5" cy="31" r="7" fill="#e6f1f3" stroke="#333" stroke-width="1.2"/><path d="M169.5 36 L177 43.5" stroke="#333" stroke-width="2.6"/>
<path d="M173 26 H179 M176 23 V29 M173 31 H179" stroke="#333" stroke-width="0.9"/>
<rect x="195" y="24.5" width="22" height="22" fill="none" stroke="#777" stroke-width="0.9" stroke-dasharray="2 1.5"/>
<circle cx="203.5" cy="31.5" r="7" fill="#e6f1f3" stroke="#333" stroke-width="1.2"/><path d="M208.5 36.5 L215.5 44" stroke="#333" stroke-width="2.6"/>
<rect x="244.5" y="23.7" width="22.5" height="17.5" rx="1.5" fill="url(#ng)" stroke="#555" stroke-width="0.9"/>
<rect x="247" y="26.5" width="17.5" height="12" fill="url(#nb)"/>
<path d="M253 41 V44.5 M259 41 V44.5 M249.5 45 H262" stroke="#777" stroke-width="1.3"/>
<rect x="291" y="24" width="22" height="22" fill="#fff" stroke="#666" stroke-width="0.9"/>
<path d="M291 27.5 H313 M291 31 H313 M291 34.5 H313 M291 38 H313 M291 41.5 H313 M294.5 24 V46 M298 24 V46 M301.5 24 V46 M305 24 V46 M308.5 24 V46" stroke="#777" stroke-width="0.9"/>
<rect x="337" y="26" width="22" height="19" fill="#6d98cf" stroke="#4a72a8" stroke-width="0.9"/>
<path d="M348 26 V45 M337 35.5 H359" stroke="#e8eef6" stroke-width="1"/>
<rect x="339" y="28" width="7" height="5.5" fill="#a9c8ee"/><rect x="350" y="28" width="7" height="5.5" fill="#a9c8ee"/><rect x="339" y="37.5" width="7" height="5.5" fill="#a9c8ee"/><rect x="350" y="37.5" width="7" height="5.5" fill="#a9c8ee"/>
</svg>
<div style="position:absolute;left:6.1px;top:1970.3px;width:448.6px;height:35.7px;background:#f1f1f1;box-sizing:border-box;border:1.3px solid #c6c6c6;border-bottom:2px solid #c0c0c0;"></div>
<div style="position:absolute;left:43.90px;top:1980.50px;font-size:15.92px;line-height:1;white-space:nowrap;transform-origin:0 0;transform:scaleX(1.0318);color:#5a5a5a;font-weight:normal;">COMMENTS</div>
<svg style="position:absolute;left:423px;top:1981px;" width="17" height="17" viewBox="0 0 17 17"><circle cx="8" cy="8" r="7.3" fill="#222"/><rect x="3.8" y="6.9" width="8.4" height="2.3" fill="#f1f1f1"/><rect x="6.85" y="3.8" width="2.3" height="8.4" fill="#f1f1f1"/></svg>
<svg style="position:absolute;left:0px;top:2020px;" width="720" height="68" viewBox="0 0 720 68">
<g fill="#555">
<rect x="16.8" y="21" width="2.6" height="17.4"/><path d="M33.5 21 V38.4 L20 29.7Z"/>
<path d="M52.5 29.7 L66 21 V38.4Z"/><rect x="68.5" y="26.5" width="3" height="6.5"/>
<path d="M92 20.5 L109.6 29.7 L92 38.9Z"/>
<rect x="127" y="26.5" width="3" height="6.5"/><path d="M133 21 L146.7 29.7 L133 38.4Z"/>
<path d="M166.9 21 L180.5 29.7 L166.9 38.4Z"/><rect x="181" y="21" width="2.6" height="17.4"/>
</g>
<path d="M231 44.8 V54 H700 V44.8" fill="none" stroke="#c8c8c8" stroke-width="2.5"/>
<rect x="266" y="44.8" width="2.5" height="9" fill="#c8c8c8"/><rect x="302" y="44.8" width="2.5" height="9" fill="#c8c8c8"/><rect x="338" y="44.8" width="2.5" height="9" fill="#c8c8c8"/><rect x="373.5" y="44.8" width="2.5" height="9" fill="#c8c8c8"/><rect x="409.8" y="44.8" width="2.5" height="9" fill="#c8c8c8"/><rect x="445.6" y="44.8" width="2.5" height="9" fill="#c8c8c8"/><rect x="482" y="44.8" width="2.5" height="9" fill="#c8c8c8"/><rect x="517.4" y="44.8" width="2.5" height="9" fill="#c8c8c8"/><rect x="553.2" y="44.8" width="2.5" height="9" fill="#c8c8c8"/><rect x="590" y="44.8" width="2.5" height="9" fill="#c8c8c8"/><rect x="626" y="44.8" width="2.5" height="9" fill="#c8c8c8"/><rect x="661.4" y="44.8" width="2.5" height="9" fill="#c8c8c8"/><g transform="translate(218.6,17)"><rect x="0" y="6" width="17.5" height="17.5" fill="#69afe5"/><polygon points="0,6 6,0 23.5,0 17.5,6" fill="#8dcbf8"/><polygon points="17.5,6 23.5,0 23.5,17.5 17.5,23.5" fill="#4a93cd"/></g><g transform="translate(255,17)"><rect x="0" y="6" width="17.5" height="17.5" fill="#69afe5"/><polygon points="0,6 6,0 23.5,0 17.5,6" fill="#8dcbf8"/><polygon points="17.5,6 23.5,0 23.5,17.5 17.5,23.5" fill="#4a93cd"/></g><g transform="translate(291,17)"><rect x="0" y="6" width="17.5" height="17.5" fill="#69afe5"/><polygon points="0,6 6,0 23.5,0 17.5,6" fill="#8dcbf8"/><polygon points="17.5,6 23.5,0 23.5,17.5 17.5,23.5" fill="#4a93cd"/></g><g transform="translate(327,17)"><rect x="1" y="1" width="21" height="21" fill="none" stroke="#3a90e0" stroke-width="0.9" stroke-dasharray="1.5 3.5"/><path d="M5 6 H13 M5 6 V17 M14 6 Q13 14 6 17" stroke="#555" stroke-width="0.9" fill="none"/><path d="M13 23 L22 14 L25 17 L16 25Z" fill="#f5b041"/><circle cx="24" cy="14.5" r="2.2" fill="#e63030"/></g><g transform="translate(362.5,17)"><rect x="0" y="18" width="17.5" height="4.5" fill="#b4b4b4"/><rect x="0" y="6" width="14" height="14" fill="#69afe5"/><polygon points="0,6 4,1.5 18,1.5 14,6" fill="#8dcbf8"/><polygon points="14,6 18,1.5 18,15.5 14,20" fill="#4a93cd"/><path d="M21.5 18 V2" stroke="#333" stroke-width="1.4"/><path d="M19.5 5 L21.5 0.5 L23.5 5Z" fill="#333"/></g><g transform="translate(398.8,17)"><rect x="1" y="1" width="21" height="21" fill="none" stroke="#3a90e0" stroke-width="0.9" stroke-dasharray="1.5 3.5"/><path d="M5 6 H13 M5 6 V17 M14 6 Q13 14 6 17" stroke="#555" stroke-width="0.9" fill="none"/><path d="M13 23 L22 14 L25 17 L16 25Z" fill="#f5b041"/><circle cx="24" cy="14.5" r="2.2" fill="#e63030"/></g><g transform="translate(434.6,17)"><rect x="1" y="1" width="21" height="21" fill="none" stroke="#3a90e0" stroke-width="0.9" stroke-dasharray="1.5 3.5"/><path d="M5 6 H13 M5 6 V17 M14 6 Q13 14 6 17" stroke="#555" stroke-width="0.9" fill="none"/><path d="M13 23 L22 14 L25 17 L16 25Z" fill="#f5b041"/><circle cx="24" cy="14.5" r="2.2" fill="#e63030"/></g><g transform="translate(471,17)"><rect x="0" y="18" width="17.5" height="4.5" fill="#b4b4b4"/><rect x="0" y="6" width="14" height="14" fill="#69afe5"/><polygon points="0,6 4,1.5 18,1.5 14,6" fill="#8dcbf8"/><polygon points="14,6 18,1.5 18,15.5 14,20" fill="#4a93cd"/><path d="M21.5 18 V2" stroke="#333" stroke-width="1.4"/><path d="M19.5 5 L21.5 0.5 L23.5 5Z" fill="#333"/></g><g transform="translate(506.4,17)"><rect x="1" y="1" width="21" height="21" fill="none" stroke="#3a90e0" stroke-width="0.9" stroke-dasharray="1.5 3.5"/><path d="M5 6 H13 M5 6 V17 M14 6 Q13 14 6 17" stroke="#555" stroke-width="0.9" fill="none"/><path d="M13 23 L22 14 L25 17 L16 25Z" fill="#f5b041"/><circle cx="24" cy="14.5" r="2.2" fill="#e63030"/></g><g transform="translate(542.2,17)"><rect x="0" y="18" width="17.5" height="4.5" fill="#b4b4b4"/><rect x="0" y="6" width="14" height="14" fill="#69afe5"/><polygon points="0,6 4,1.5 18,1.5 14,6" fill="#8dcbf8"/><polygon points="14,6 18,1.5 18,15.5 14,20" fill="#4a93cd"/><path d="M21.5 18 V2" stroke="#333" stroke-width="1.4"/><path d="M19.5 5 L21.5 0.5 L23.5 5Z" fill="#333"/></g><g transform="translate(579,17)"><rect x="0" y="6" width="17.5" height="17.5" fill="#69afe5"/><polygon points="0,6 6,0 23.5,0 17.5,6" fill="#8dcbf8"/><polygon points="17.5,6 23.5,0 23.5,17.5 17.5,23.5" fill="#4a93cd"/></g><g transform="translate(615,17)"><rect x="0" y="6" width="17.5" height="17.5" fill="#69afe5"/><polygon points="0,6 6,0 23.5,0 17.5,6" fill="#8dcbf8"/><polygon points="17.5,6 23.5,0 23.5,17.5 17.5,23.5" fill="#4a93cd"/></g><g transform="translate(650.4,17)" opacity="0.3"><rect x="1" y="1" width="21" height="21" fill="none" stroke="#3a90e0" stroke-width="0.9" stroke-dasharray="1.5 3.5"/><path d="M5 6 H13 M5 6 V17 M14 6 Q13 14 6 17" stroke="#555" stroke-width="0.9" fill="none"/><path d="M13 23 L22 14 L25 17 L16 25Z" fill="#f5b041"/><circle cx="24" cy="14.5" r="2.2" fill="#e63030"/></g><g transform="translate(686.7,17)" opacity="0.3"><rect x="1" y="1" width="21" height="21" fill="none" stroke="#3a90e0" stroke-width="0.9" stroke-dasharray="1.5 3.5"/><path d="M5 6 H13 M5 6 V17 M14 6 Q13 14 6 17" stroke="#555" stroke-width="0.9" fill="none"/><path d="M13 23 L22 14 L25 17 L16 25Z" fill="#f5b041"/><circle cx="24" cy="14.5" r="2.2" fill="#e63030"/></g><rect x="643.5" y="14" width="3" height="41" fill="#555"/><path d="M636 8 H654 V14 L648 19 H642 L636 14Z" fill="#555"/>
</svg>
<svg style="position:absolute;left:3795px;top:2035px;" width="30" height="30" viewBox="0 0 30 30"><g transform="translate(15,15)" fill="#6b6b6b"><rect x="-2.2" y="-10.5" width="4.4" height="5" transform="rotate(0)"/><rect x="-2.2" y="-10.5" width="4.4" height="5" transform="rotate(45)"/><rect x="-2.2" y="-10.5" width="4.4" height="5" transform="rotate(90)"/><rect x="-2.2" y="-10.5" width="4.4" height="5" transform="rotate(135)"/><rect x="-2.2" y="-10.5" width="4.4" height="5" transform="rotate(180)"/><rect x="-2.2" y="-10.5" width="4.4" height="5" transform="rotate(225)"/><rect x="-2.2" y="-10.5" width="4.4" height="5" transform="rotate(270)"/><rect x="-2.2" y="-10.5" width="4.4" height="5" transform="rotate(315)"/><circle r="7.6"/><circle r="3.2" fill="#f1f1f1"/></g></svg>
<svg style="position:absolute;left:3795px;top:1980px;" width="24" height="24" viewBox="0 0 24 24"><circle cx="12" cy="12" r="11" fill="#111"/><path d="M6 14 L16 8 M7 17 L17 11 M11 17 L17 13" stroke="#fff" stroke-width="1.3"/></svg>
<svg style="position:absolute;left:28px;top:2104px;" width="34" height="38" viewBox="0 0 34 38"><rect x="17" y="3" width="10" height="30" rx="5" fill="#cfe8ff" stroke="#bcdcfa" stroke-width="1"/>
<rect x="20" y="6" width="4" height="20" rx="2" fill="#b9c5d0"/><rect x="20" y="15" width="4" height="12" fill="#1e9af0"/>
<circle cx="22" cy="29" r="5.3" fill="#1684e0"/><circle cx="22.5" cy="30" r="1.8" fill="#9fd0ff"/>
<path d="M2.5 7 H11 L10 12 L8.5 10 L7.5 14 L6 10 L5 12 L4 9.5Z" fill="#7fc4f5"/></svg>
<div style="position:absolute;left:76.40px;top:2103.80px;font-size:16.34px;line-height:1;white-space:nowrap;transform-origin:0 0;transform:scaleX(1.1068);color:#1a1a1a;font-weight:normal;">Cold weather</div>
<div style="position:absolute;left:75.27px;top:2127.50px;font-size:16.34px;line-height:1;white-space:nowrap;transform-origin:0 0;transform:scaleX(1.1326);color:#555;font-weight:normal;">Now</div>
<svg style="position:absolute;left:1466px;top:2104px;" width="42" height="42" viewBox="0 0 42 42"><defs><linearGradient id="wl" x1="0" y1="0" x2="1" y2="1"><stop offset="0" stop-color="#4cc2ff"/><stop offset="1" stop-color="#0063d1"/></linearGradient></defs>
<rect x="3.8" y="3.2" width="16.7" height="16.7" rx="1.2" fill="url(#wl)"/><rect x="21.8" y="3.2" width="16.7" height="16.7" rx="1.2" fill="url(#wl)"/>
<rect x="3.8" y="21.2" width="16.7" height="16.7" rx="1.2" fill="url(#wl)"/><rect x="21.8" y="21.2" width="16.7" height="16.7" rx="1.2" fill="url(#wl)"/></svg>
<div style="position:absolute;left:1526.5px;top:2101.6px;width:326.5px;height:45.4px;background:rgba(255,250,250,0.75);box-sizing:border-box;border:1px solid #e0d0d2;border-radius:23px;"></div>
<svg style="position:absolute;left:1540px;top:2112px;" width="28" height="28" viewBox="0 0 28 28"><circle cx="11.5" cy="11" r="8" fill="none" stroke="#1a1a1a" stroke-width="2.3"/><path d="M17.3 17 L24 23.5" stroke="#1a1a1a" stroke-width="2.6" stroke-linecap="round"/></svg>
<div style="position:absolute;left:1580.90px;top:2118.50px;font-size:17.46px;line-height:1;white-space:nowrap;transform-origin:0 0;transform:scaleX(1.1200);color:#555;font-weight:normal;">Search</div>
<svg style="position:absolute;left:1868px;top:2100px;" width="520" height="60" viewBox="0 0 520 60">
<rect x="13" y="3" width="23" height="23" rx="2" fill="#f4f4f4" stroke="#ddd" stroke-width="0.8"/><rect x="4.3" y="12.3" width="22" height="22" rx="2" fill="#1f1f1f"/><rect x="13" y="12.3" width="13.3" height="14" fill="#cfcfcf"/>
<rect x="70.7" y="10" width="35.4" height="27" rx="3" fill="#1d5fa8"/><path d="M80 10 V5 Q80 2.5 83 2.5 H94 Q97 2.5 97 5 V10" fill="none" stroke="#3aa0f0" stroke-width="2"/>
<rect x="81" y="17" width="6" height="6" fill="#f25022"/><rect x="88.5" y="17" width="6" height="6" fill="#7fba00"/><rect x="81" y="24.5" width="6" height="6" fill="#00a4ef"/><rect x="88.5" y="24.5" width="6" height="6" fill="#ffb900"/>
<path d="M126.7 8 H141 L144 11 H162.8 V37.5 H126.7Z" fill="#f7c948"/><path d="M126.7 15 H162.8 V37.5 H126.7Z" fill="#ffd75e"/><rect x="137" y="27.5" width="16" height="4" rx="1" fill="#1f6fd8"/>
<path d="M203 17 Q203 5 220 5 Q238 6 239 20 Q232 15 223 18 Q213 22 216 32 Q205 30 203 17Z" fill="#33c481"/><path d="M203 17 Q200 33 218 38 Q230 40 239 31 Q228 34 221 29 Q214 22 221 17 Q210 12 203 17Z" fill="#1b8ae0"/>
<rect x="201.5" y="24" width="15" height="13" rx="1.5" fill="#c47c2a"/><rect x="205" y="21" width="8" height="4" fill="none" stroke="#8a5314" stroke-width="1.3"/>
<path d="M286.3 4 L304.4 37 H268.2Z" fill="#ffd21f" stroke="#a58a1a" stroke-width="1"/><rect x="284.8" y="14" width="3" height="13" fill="#1a1a1a"/><rect x="284.8" y="29.5" width="3" height="3" fill="#1a1a1a"/>
<rect x="324.9" y="-4.3" width="55.9" height="56.3" rx="4" fill="#fbe8ea"/>
<rect x="335.3" y="4" width="29" height="26" rx="2" fill="#ff7a1a"/><path d="M335.3 6 L339 4 V30 L335.3 32Z" fill="#e0600a"/><rect x="339" y="28" width="31" height="10" rx="1" fill="#b8460f"/>
<text x="354" y="23" font-size="17" font-weight="bold" fill="#fff" text-anchor="middle" font-family="Liberation Sans">F</text><text x="354.5" y="36" font-size="7" font-weight="bold" fill="#fff" text-anchor="middle" font-family="Liberation Sans">FUS</text>
<rect x="341.7" y="48" width="22.3" height="4" rx="2" fill="#1f6fd8"/>
<rect x="401.3" y="6" width="22" height="22" rx="2" fill="#eee"/><path d="M403 8 V20 M403 8 H415" stroke="#e03030" stroke-width="2.5" stroke-dasharray="3 2"/>
<path d="M410 16 L428 34 M424 20 L412 36" stroke="#555" stroke-width="1.8"/><circle cx="433" cy="27" r="3.5" fill="none" stroke="#1a8ae0" stroke-width="2"/><circle cx="411" cy="38" r="3.5" fill="none" stroke="#1a8ae0" stroke-width="2"/>
<rect x="468.4" y="7" width="32.4" height="31" rx="3" fill="#1e88e5"/><path d="M468.4 32 L480 20 L490 28 L500.8 18 V38 H468.4Z" fill="#8fd3ff"/><circle cx="494" cy="12.5" r="2.8" fill="#fff"/>
<g fill="#666"><rect x="151.3" y="47" width="10" height="4" rx="2"/><rect x="217.3" y="47" width="10" height="4" rx="2"/><rect x="282.9" y="47" width="10" height="4" rx="2"/><rect x="414.2" y="47" width="10" height="4" rx="2"/><rect x="480.2" y="47" width="10" height="4" rx="2"/></g>
</svg>
<svg style="position:absolute;left:3530px;top:2100px;" width="180" height="50" viewBox="0 0 180 50">
<path d="M11.5 26.5 L19 19 L26.5 26.5" fill="none" stroke="#1a1a1a" stroke-width="1.7"/>
<defs><linearGradient id="cl" x1="0" y1="0" x2="1" y2="1"><stop offset="0" stop-color="#eee"/><stop offset="1" stop-color="#888"/></linearGradient></defs>
<path d="M59 29 Q55 29 55.5 24 Q56 20 60 20 Q62 15 68 15 Q74 15 75.5 21 Q79 21.5 78.5 26 Q78 29 75 29Z" fill="url(#cl)" stroke="#1a1a1a" stroke-width="1.3"/>
<path d="M57.5 14 L77 34" stroke="#1a1a1a" stroke-width="1.4"/>
<rect x="103.8" y="12.5" width="17" height="17.5" rx="1" fill="none" stroke="#1a1a1a" stroke-width="1.4"/>
<path d="M108 35.5 H118 M113 30 V35.5" stroke="#1a1a1a" stroke-width="1.4"/><rect x="120.5" y="10" width="6" height="9" rx="2" fill="#f6d9dc" stroke="#1a1a1a" stroke-width="1.3"/><path d="M123.5 19 V35.5" stroke="#1a1a1a" stroke-width="1.3"/>
<path d="M139.5 23 H144.5 L150.5 16.5 V33.5 L144.5 27.5 H139.5Z" fill="none" stroke="#1a1a1a" stroke-width="1.4"/>
<path d="M154.5 20.5 Q157 25 154.5 29.5 M158.5 17.5 Q162.5 25 158.5 32.5" fill="none" stroke="#1a1a1a" stroke-width="1.4"/>
<path d="M162.5 15 Q167 25 162.5 35" fill="none" stroke="#bbb" stroke-width="1.2"/>
</svg>
<div style="position:absolute;left:3745.00px;top:2104.60px;font-size:16.76px;line-height:1;white-space:nowrap;transform-origin:0 0;transform:scaleX(1.0631);color:#1a1a1a;font-weight:normal;">8:38 AM</div>
<div style="position:absolute;left:3717.56px;top:2128.60px;font-size:16.76px;line-height:1;white-space:nowrap;transform-origin:0 0;transform:scaleX(1.1446);color:#1a1a1a;font-weight:normal;">11/11/2025</div>
</body></html>
